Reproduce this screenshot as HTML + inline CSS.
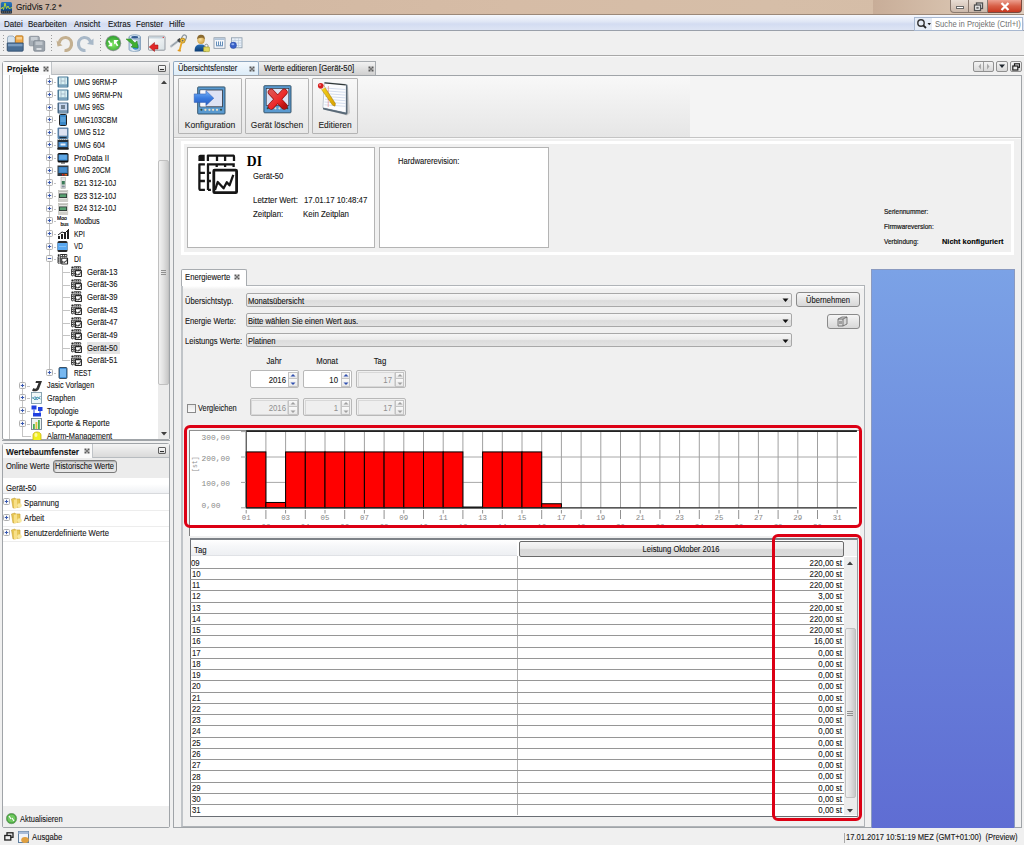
<!DOCTYPE html><html><head><meta charset="utf-8"><style>
html,body{margin:0;padding:0;}
body{width:1024px;height:845px;overflow:hidden;position:relative;background:#f0f0f0;font-family:"Liberation Sans",sans-serif;}
body>div{position:absolute;box-sizing:border-box;}
</style></head><body>
<div style="left:0px;top:0px;width:1024px;height:15px;background:linear-gradient(to right,#c6b0a2 0%,#d2b8a2 20%,#d6bca6 50%,#d6bea8 75%,#d4bca6 100%);"></div>
<div style="left:873px;top:0px;width:151px;height:14px;background:linear-gradient(to right,#c8ad98,#d6c0ac 50%,#e0cfc0 100%);"></div>
<div style="left:0px;top:14px;width:1024px;height:1px;background:#9c8878;"></div>
<svg style="position:absolute;left:0px;top:0px" width="15" height="15" viewBox="0 0 15 15"><defs><linearGradient id="aig" x1="0" y1="0" x2="0" y2="1"><stop offset="0" stop-color="#2a78c0"/><stop offset="1" stop-color="#0a3a78"/></linearGradient></defs><rect x="0.8" y="2" width="11.2" height="11.5" rx="1.5" fill="url(#aig)"/><path d="M1 9 L2.5 7 L3.5 9.5 L5 3 L6.5 8.5 L8 6 L9.5 9 L11 7.5 L12 8" stroke="#b8d838" stroke-width="1" fill="none"/><rect x="1" y="10.8" width="11" height="2.5" fill="#303840"/><path d="M2 12 L11 12" stroke="#a0a0a0" stroke-width="0.6" stroke-dasharray="1 1"/></svg>
<div style="left:15.5px;top:3.16px;font:normal 9.265999999999998px/9.265999999999998px 'Liberation Sans';color:#1a1a1a;white-space:nowrap;transform:scaleX(0.885);transform-origin:0 50%;-webkit-text-stroke:0.1px #000;">GridVis 7.2 *</div>
<div style="left:950px;top:0px;width:19px;height:13px;background:linear-gradient(#e8ddd4,#cbb8aa);border:1px solid #8a7a70;border-top:none;border-radius:0 0 0 4px;"></div>
<div style="left:969px;top:0px;width:19px;height:13px;background:linear-gradient(#e8ddd4,#cbb8aa);border:1px solid #8a7a70;border-top:none;border-left:none;"></div>
<div style="left:988px;top:0px;width:34px;height:13px;background:linear-gradient(#eca090,#d86048 50%,#c83820);border:1px solid #7a4a40;border-top:none;border-left:none;border-radius:0 0 4px 0;"></div>
<div style="left:956px;top:6px;width:8px;height:3px;background:#fff;border:1px solid #6a6a6a;"></div>
<svg style="position:absolute;left:972px;top:2px" width="14" height="10" viewBox="0 0 14 10"><rect x="4.5" y="1" width="6" height="5.5" fill="#f0f0f0" stroke="#505050" stroke-width="1.3"/><rect x="2.5" y="3" width="6" height="5.5" fill="#f4f4f4" stroke="#505050" stroke-width="1.3"/><rect x="4.3" y="4.8" width="2.4" height="2" fill="#6a6a6a"/></svg>
<svg style="position:absolute;left:998px;top:1px" width="14" height="11" viewBox="0 0 14 11"><path d="M3.5 2 L10.5 9 M10.5 2 L3.5 9" stroke="#fff" stroke-width="2.2"/></svg>
<div style="left:0px;top:15px;width:1024px;height:16px;background:linear-gradient(#f6f8fd 0%,#dfe6f5 45%,#d3dcf1 60%,#dde4f4 100%);border-bottom:1px solid #9aa0aa;"></div>
<div style="left:3.5px;top:20.17px;font:normal 9.04px/9.04px 'Liberation Sans';color:#1a1a1a;white-space:nowrap;transform:scaleX(0.885);transform-origin:0 50%;-webkit-text-stroke:0.1px #000;">Datei</div>
<div style="left:28.3px;top:20.17px;font:normal 9.04px/9.04px 'Liberation Sans';color:#1a1a1a;white-space:nowrap;transform:scaleX(0.885);transform-origin:0 50%;-webkit-text-stroke:0.1px #000;">Bearbeiten</div>
<div style="left:73.8px;top:20.17px;font:normal 9.04px/9.04px 'Liberation Sans';color:#1a1a1a;white-space:nowrap;transform:scaleX(0.885);transform-origin:0 50%;-webkit-text-stroke:0.1px #000;">Ansicht</div>
<div style="left:108.4px;top:20.17px;font:normal 9.04px/9.04px 'Liberation Sans';color:#1a1a1a;white-space:nowrap;transform:scaleX(0.885);transform-origin:0 50%;-webkit-text-stroke:0.1px #000;">Extras</div>
<div style="left:135.7px;top:20.17px;font:normal 9.04px/9.04px 'Liberation Sans';color:#1a1a1a;white-space:nowrap;transform:scaleX(0.885);transform-origin:0 50%;-webkit-text-stroke:0.1px #000;">Fenster</div>
<div style="left:168.9px;top:20.17px;font:normal 9.04px/9.04px 'Liberation Sans';color:#1a1a1a;white-space:nowrap;transform:scaleX(0.885);transform-origin:0 50%;-webkit-text-stroke:0.1px #000;">Hilfe</div>
<div style="left:914px;top:16.5px;width:109px;height:14.0px;background:#fff;border:1px solid #a8b8d0;"></div>
<div style="left:915px;top:17.5px;width:17px;height:12.0px;background:#e6ecf6;"></div>
<svg style="position:absolute;left:916px;top:18px" width="16" height="12" viewBox="0 0 16 12"><circle cx="5" cy="5" r="3.2" stroke="#333" stroke-width="1.4" fill="none"/><path d="M7.3 7.3 L10 10" stroke="#222" stroke-width="1.8"/><path d="M11.5 5 L15 5 L13.25 7.2 Z" fill="#222"/></svg>
<div style="left:935px;top:19.85px;font:normal 8.678117456640946px/8.678117456640946px 'Liberation Sans';color:#707070;white-space:nowrap;transform:scaleX(0.885);transform-origin:0 50%;">Suche in Projekte (Ctrl+I)</div>
<div style="left:0px;top:31px;width:1024px;height:24px;background:#f0f0f0;"></div>
<div style="left:0px;top:55px;width:1024px;height:1px;background:#a8a8a8;"></div>
<div style="left:0px;top:56px;width:1024px;height:1px;background:#fafafa;"></div>
<div style="left:3px;top:35px;width:1px;height:16px;background:repeating-linear-gradient(#9a9a9a 0 1px,transparent 1px 3px);"></div>
<div style="left:51px;top:35px;width:1px;height:16px;background:repeating-linear-gradient(#9a9a9a 0 1px,transparent 1px 3px);"></div>
<div style="left:100px;top:35px;width:1px;height:16px;background:repeating-linear-gradient(#9a9a9a 0 1px,transparent 1px 3px);"></div>
<svg style="position:absolute;left:6px;top:34px" width="19" height="19" viewBox="0 0 19 19"><path d="M1.5 16 L1.5 4 Q1.5 2 3.5 2 L7 2 L9 4 L9 9 L1.5 9 Z" fill="#d4e2ee" stroke="#8aa0b4" stroke-width="0.8"/><rect x="9.5" y="1.8" width="7.5" height="7.5" rx="1" fill="#f0a848" stroke="#b87820" stroke-width="0.8"/><rect x="10.5" y="3" width="5.5" height="2.5" fill="#f8d090"/><path d="M1.2 9 L17.2 9 L17.2 16.2 Q17.2 17.2 16.2 17.2 L2.2 17.2 Q1.2 17.2 1.2 16.2 Z" fill="#4a6e94" stroke="#2e4a68" stroke-width="0.8"/><rect x="2" y="9.8" width="14.5" height="2.5" fill="#7a9cc0"/></svg>
<svg style="position:absolute;left:28px;top:35px" width="18" height="17" viewBox="0 0 18 17"><rect x="1.3" y="1.3" width="10" height="9.5" rx="1.2" fill="#a4acb4" stroke="#848c96" stroke-width="0.8"/><rect x="3" y="2" width="6.5" height="3.5" fill="#c8ced4"/><rect x="5.7" y="5.7" width="11" height="10.5" rx="1.2" fill="#9ca4ac" stroke="#7c848e" stroke-width="0.8"/><rect x="7.5" y="6.5" width="7" height="3.5" fill="#c0c6cc"/><rect x="8.5" y="13" width="5" height="2" fill="#d8dce0"/></svg>
<svg style="position:absolute;left:56px;top:35px" width="17" height="17" viewBox="0 0 17 17"><path d="M3.2 8.5 C3.5 4 7 2.3 10 2.5 C14 3 15.8 6.5 15.5 9.8 C15 13.5 12 15.8 8.5 15.5" stroke="#c4b090" stroke-width="3.2" fill="none"/><path d="M0.5 5.5 L6.5 10.5 L1.5 11.5 Z" fill="#c4b090"/></svg>
<svg style="position:absolute;left:77px;top:35px" width="17" height="17" viewBox="0 0 17 17"><path d="M13.8 8.5 C13.5 4 10 2.3 7 2.5 C3 3 1.2 6.5 1.5 9.8 C2 13.5 5 15.8 8.5 15.5" stroke="#a8b8c8" stroke-width="3.2" fill="none"/><path d="M16.5 3.5 L16.5 10 L10 9 Z" fill="#a8b8c8"/></svg>
<svg style="position:absolute;left:103px;top:33px" width="20" height="20" viewBox="0 0 20 20"><defs><radialGradient id="gg" cx="0.5" cy="0.6" r="0.6"><stop offset="0" stop-color="#80e860"/><stop offset="1" stop-color="#30a030"/></radialGradient></defs><circle cx="10.2" cy="10.2" r="8" fill="#8a9490"/><circle cx="10.2" cy="10.2" r="7.1" fill="url(#gg)"/><path d="M5.6 7.6 L8.4 12.6" stroke="#fff" stroke-width="1.6"/><path d="M4.8 13.3 L9.2 13.3 L9.2 9.2 Z" fill="#fff"/><path d="M11.6 7.8 L14.6 12.8" stroke="#fff" stroke-width="1.6"/><path d="M10.8 7 L15.6 7 L11 11.6 Z" fill="#fff"/></svg>
<svg style="position:absolute;left:124px;top:33px" width="18" height="20" viewBox="0 0 18 20"><defs><linearGradient id="dbg" x1="0" x2="1"><stop offset="0" stop-color="#b8d0e8"/><stop offset="0.4" stop-color="#f4f8fc"/><stop offset="1" stop-color="#90b0d0"/></linearGradient></defs><path d="M5 4 L5 16.5 C5 19 16.5 19 16.5 16.5 L16.5 4 Z" fill="url(#dbg)" stroke="#7090b0" stroke-width="0.7"/><ellipse cx="10.75" cy="4" rx="5.75" ry="2.2" fill="#d8e8f4" stroke="#7090b0" stroke-width="0.7"/><ellipse cx="10.75" cy="4.2" rx="3.5" ry="1.2" fill="#305890"/><circle cx="11.5" cy="13.5" r="3.2" fill="#3a90d0"/><path d="M2 6 L7 6 L11 10 L13 8 L14 15 L7 14 L9 12 Z" fill="#40b030" stroke="#288020" stroke-width="0.5"/></svg>
<svg style="position:absolute;left:147px;top:35px" width="19" height="17" viewBox="0 0 19 17"><defs><linearGradient id="wg" x1="0" y1="0" x2="1" y2="1"><stop offset="0" stop-color="#ffffff"/><stop offset="1" stop-color="#d8e0e4"/></linearGradient></defs><rect x="1.5" y="1.2" width="16.5" height="14" rx="0.8" fill="url(#wg)" stroke="#8a9098" stroke-width="0.9"/><rect x="1.8" y="1.5" width="16" height="2" fill="#c8d4dc"/><circle cx="16.3" cy="2.4" r="0.7" fill="#e04040"/><path d="M2.2 12 L7.5 7.5 L7.5 10 L11 10 L11 14 L7.5 14 L7.5 16.5 Z" fill="#e02828" stroke="#a01010" stroke-width="0.5"/></svg>
<svg style="position:absolute;left:168px;top:30px" width="22" height="24" viewBox="0 0 22 24"><ellipse cx="15.9" cy="8" rx="2.2" ry="3.2" transform="rotate(30 15.9 8)" fill="none" stroke="#8a949c" stroke-width="1.1"/><path d="M3.2 16.3 L11.6 9.9" stroke="#b8c0c8" stroke-width="2.4" stroke-linecap="round"/><path d="M3.5 16 L11 10.3" stroke="#707880" stroke-width="0.6"/><rect x="9.8" y="8.6" width="3.2" height="3.6" transform="rotate(-37 11.4 10.4)" fill="#404448"/><circle cx="14.6" cy="10.6" r="2.5" fill="#f0c040" stroke="#b08010" stroke-width="0.8"/><circle cx="14.6" cy="10.6" r="0.9" fill="#606870"/><path d="M13.6 12.8 L11.6 20.5" stroke="#e8a828" stroke-width="1.8"/><path d="M10 19.5 L13 20.2 L12.5 21.8 L9.5 21" fill="#e09820"/></svg>
<svg style="position:absolute;left:190.5px;top:33px" width="20" height="20" viewBox="0 0 20 20"><defs><radialGradient id="fg" cx="0.4" cy="0.4" r="0.6"><stop offset="0" stop-color="#f8e0a0"/><stop offset="1" stop-color="#d0a040"/></radialGradient><linearGradient id="bg2" x1="0" y1="0" x2="0" y2="1"><stop offset="0" stop-color="#2a70b8"/><stop offset="1" stop-color="#0a3a70"/></linearGradient></defs><path d="M3.6 18.5 C3.6 13 5.5 11.5 9.8 11.5 C13.8 11.5 15 13 15 18.5 Z" fill="url(#bg2)"/><circle cx="10" cy="7.2" r="3.7" fill="url(#fg)"/><path d="M6.2 6.5 C6 3 8 1.8 10.2 1.8 C12.8 1.8 14.2 3.5 13.8 7 C13 4.8 11.5 4.5 10 4.8 C8 5 7 5.5 6.2 6.5 Z" fill="#8a6a30"/><path d="M13.8 14.2 L13.8 12.5 C13.8 10.8 17 10.8 17 12.5 L17 14.2" fill="none" stroke="#8a9090" stroke-width="1"/><rect x="12.6" y="14" width="5.8" height="4.6" rx="0.5" fill="#e0d860" stroke="#a09820" stroke-width="0.6"/></svg>
<svg style="position:absolute;left:213px;top:37px" width="13" height="13" viewBox="0 0 13 13"><rect x="1" y="0.8" width="11" height="10.5" fill="#f4f6fa" stroke="#8090a0" stroke-width="0.8"/><rect x="1.4" y="1.2" width="10.2" height="1.8" fill="#b0c4d8"/><path d="M3.5 4.5 L3.5 8.5 M5.5 4.5 L5.5 8.5 M7.5 4.5 L7.5 8.5 M9.5 4.5 L9.5 8.5 M3 8.8 L10 8.8" stroke="#5080b0" stroke-width="0.9"/></svg>
<svg style="position:absolute;left:229px;top:37px" width="14" height="13" viewBox="0 0 14 13"><rect x="2.5" y="0.8" width="10.5" height="10" fill="#e8f0f8" stroke="#8898a8" stroke-width="0.8"/><path d="M2.5 3.5 L13 3.5 M2.5 6 L13 6 M2.5 8.5 L13 8.5 M6 0.8 L6 10.8 M9.5 0.8 L9.5 10.8" stroke="#b8c8d8" stroke-width="0.6"/><circle cx="4.3" cy="8.3" r="3.2" fill="#3860c8" stroke="#2848a0" stroke-width="0.5"/><ellipse cx="3.8" cy="7.3" rx="1.5" ry="1" fill="#90b0f0"/></svg>
<div style="left:2px;top:61px;width:168px;height:379px;border:1px solid #a0a4a8;border-radius:3px 3px 2px 2px;background:#fff;"></div>
<div style="left:3px;top:62px;width:166px;height:13px;background:linear-gradient(#f4f4f4,#dadada);border-bottom:1px solid #b8bcc0;"></div>
<div style="left:3px;top:62px;width:49px;height:13px;background:#fafafa;border-right:1px solid #c0c4c8;"></div>
<div style="left:6.5px;top:64.69px;font:bold 9.2095px/9.2095px 'Liberation Sans';color:#1a1a1a;white-space:nowrap;transform:scaleX(0.885);transform-origin:0 50%;-webkit-text-stroke:0.1px #000;">Projekte</div>
<svg style="position:absolute;left:43px;top:66px" width="6" height="6" viewBox="0 0 6 6"><g fill="#5a5a5a"><rect x="0.5" y="0.5" width="2" height="2"/><rect x="3.5" y="0.5" width="2" height="2"/><rect x="0.5" y="3.5" width="2" height="2"/><rect x="3.5" y="3.5" width="2" height="2"/><rect x="2" y="2" width="2" height="2" fill="#787878"/></g></svg>
<div style="left:158px;top:65px;width:8px;height:7px;border:1px solid #606060;border-radius:1px;background:linear-gradient(#fafafa,#d8d8d8);"></div>
<div style="left:160px;top:69px;width:4px;height:1px;background:#303030;"></div>
<div style="left:158px;top:75px;width:11px;height:364px;background:#ececec;"></div>
<div style="left:158px;top:159.5px;width:11px;height:225.0px;background:linear-gradient(to right,#f2f2f2,#e0e0e0 50%,#c8c8c8);border:1px solid #c0c0c0;border-radius:2px;"></div>
<div style="left:161px;top:270px;width:5px;height:1px;background:#909090;"></div>
<div style="left:161px;top:272px;width:5px;height:1px;background:#909090;"></div>
<div style="left:161px;top:274px;width:5px;height:1px;background:#909090;"></div>
<svg style="position:absolute;left:160px;top:79px" width="8" height="6" viewBox="0 0 8 6"><path d="M1 5 L4 1.5 L7 5 Z" fill="#404040"/></svg>
<svg style="position:absolute;left:160px;top:431px" width="8" height="6" viewBox="0 0 8 6"><path d="M1 1 L4 4.5 L7 1 Z" fill="#404040"/></svg>
<div style="left:9px;top:75px;width:1px;height:364px;background:repeating-linear-gradient(#c4c4c4 0 1px,#c4c4c4 1px 2px);"></div>
<div style="left:22px;top:75px;width:1px;height:362px;background:repeating-linear-gradient(#c4c4c4 0 1px,#c4c4c4 1px 2px);"></div>
<div style="left:49px;top:75px;width:1px;height:298px;background:repeating-linear-gradient(#c4c4c4 0 1px,#c4c4c4 1px 2px);"></div>
<div style="left:62px;top:265.95px;width:1px;height:95.55000000000001px;background:repeating-linear-gradient(#c4c4c4 0 1px,#c4c4c4 1px 2px);"></div>
<div style="left:54px;top:82px;width:2px;height:1px;background:repeating-linear-gradient(to right,#c4c4c4 0 1px,#c4c4c4 1px 2px);"></div>
<svg style="position:absolute;left:46px;top:78px" width="8" height="8" viewBox="0 0 8 8"><rect x="0.5" y="0.5" width="6" height="6" rx="1" fill="#fafafa" stroke="#b0b0b0"/><path d="M1.8 3.5 L5.2 3.5" stroke="#3858b0" stroke-width="1"/><path d="M3.5 1.8 L3.5 5.2" stroke="#3858b0" stroke-width="1"/></svg>
<svg style="position:absolute;left:57px;top:76.2px" width="12" height="12" viewBox="0 0 12 12"><rect x="0.5" y="0.5" width="11" height="11" fill="#4a7a98" rx="1"/><rect x="2" y="1.5" width="8" height="7" fill="#d8f0f4"/><path d="M4 2 L4 8 M8 2 L8 8 M4 5 L8 5" stroke="#9ab" stroke-width="0.7"/><rect x="2" y="9.5" width="8" height="1" fill="#a8c8e0"/></svg>
<div style="left:74px;top:77.89px;font:normal 8.379888268156424px/8.379888268156424px 'Liberation Sans';color:#1a1a1a;white-space:nowrap;transform:scaleX(0.823);transform-origin:0 50%;-webkit-text-stroke:0.1px #000;">UMG 96RM-P</div>
<div style="left:54px;top:95px;width:2px;height:1px;background:repeating-linear-gradient(to right,#c4c4c4 0 1px,#c4c4c4 1px 2px);"></div>
<svg style="position:absolute;left:46px;top:91px" width="8" height="8" viewBox="0 0 8 8"><rect x="0.5" y="0.5" width="6" height="6" rx="1" fill="#fafafa" stroke="#b0b0b0"/><path d="M1.8 3.5 L5.2 3.5" stroke="#3858b0" stroke-width="1"/><path d="M3.5 1.8 L3.5 5.2" stroke="#3858b0" stroke-width="1"/></svg>
<svg style="position:absolute;left:57px;top:88.85000000000001px" width="12" height="12" viewBox="0 0 12 12"><rect x="0.5" y="0.5" width="11" height="11" fill="#4a7a98" rx="1"/><rect x="2" y="1.5" width="8" height="7" fill="#d8f0f4"/><path d="M4 2 L4 8 M8 2 L8 8 M4 5 L8 5" stroke="#9ab" stroke-width="0.7"/><rect x="2" y="9.5" width="8" height="1" fill="#a8c8e0"/></svg>
<div style="left:74px;top:90.54px;font:normal 8.379888268156424px/8.379888268156424px 'Liberation Sans';color:#1a1a1a;white-space:nowrap;transform:scaleX(0.823);transform-origin:0 50%;-webkit-text-stroke:0.1px #000;">UMG 96RM-PN</div>
<div style="left:54px;top:108px;width:2px;height:1px;background:repeating-linear-gradient(to right,#c4c4c4 0 1px,#c4c4c4 1px 2px);"></div>
<svg style="position:absolute;left:46px;top:104px" width="8" height="8" viewBox="0 0 8 8"><rect x="0.5" y="0.5" width="6" height="6" rx="1" fill="#fafafa" stroke="#b0b0b0"/><path d="M1.8 3.5 L5.2 3.5" stroke="#3858b0" stroke-width="1"/><path d="M3.5 1.8 L3.5 5.2" stroke="#3858b0" stroke-width="1"/></svg>
<svg style="position:absolute;left:57px;top:101.5px" width="12" height="12" viewBox="0 0 12 12"><rect x="0.5" y="0.5" width="11" height="11" fill="#4a6a88" rx="1"/><rect x="2" y="1.5" width="8" height="7" fill="#c8d8f0"/><rect x="4" y="3" width="4" height="4" fill="#708090"/><rect x="2" y="9.5" width="8" height="1" fill="#a8c8e0"/></svg>
<div style="left:74px;top:103.19px;font:normal 8.379888268156424px/8.379888268156424px 'Liberation Sans';color:#1a1a1a;white-space:nowrap;transform:scaleX(0.829);transform-origin:0 50%;-webkit-text-stroke:0.1px #000;">UMG 96S</div>
<div style="left:54px;top:120px;width:2px;height:1px;background:repeating-linear-gradient(to right,#c4c4c4 0 1px,#c4c4c4 1px 2px);"></div>
<svg style="position:absolute;left:46px;top:116px" width="8" height="8" viewBox="0 0 8 8"><rect x="0.5" y="0.5" width="6" height="6" rx="1" fill="#fafafa" stroke="#b0b0b0"/><path d="M1.8 3.5 L5.2 3.5" stroke="#3858b0" stroke-width="1"/><path d="M3.5 1.8 L3.5 5.2" stroke="#3858b0" stroke-width="1"/></svg>
<svg style="position:absolute;left:57px;top:114.15px" width="12" height="12" viewBox="0 0 12 12"><rect x="2.5" y="0.5" width="7" height="11" rx="1" fill="#3a88c8" stroke="#202020" stroke-width="1"/><rect x="3.5" y="3" width="5" height="5" fill="#5aa0d8"/></svg>
<div style="left:74px;top:115.84px;font:normal 8.379888268156424px/8.379888268156424px 'Liberation Sans';color:#1a1a1a;white-space:nowrap;transform:scaleX(0.832);transform-origin:0 50%;-webkit-text-stroke:0.1px #000;">UMG103CBM</div>
<div style="left:54px;top:133px;width:2px;height:1px;background:repeating-linear-gradient(to right,#c4c4c4 0 1px,#c4c4c4 1px 2px);"></div>
<svg style="position:absolute;left:46px;top:129px" width="8" height="8" viewBox="0 0 8 8"><rect x="0.5" y="0.5" width="6" height="6" rx="1" fill="#fafafa" stroke="#b0b0b0"/><path d="M1.8 3.5 L5.2 3.5" stroke="#3858b0" stroke-width="1"/><path d="M3.5 1.8 L3.5 5.2" stroke="#3858b0" stroke-width="1"/></svg>
<svg style="position:absolute;left:57px;top:126.80000000000001px" width="12" height="12" viewBox="0 0 12 12"><rect x="0.5" y="0.5" width="11" height="11.5" rx="1" fill="#5a88b0"/><rect x="1.8" y="1.5" width="8.5" height="7.5" fill="#dde2f2" stroke="#3a6088" stroke-width="0.5"/><rect x="2.5" y="10" width="7" height="1.2" fill="#1a2a3a"/></svg>
<div style="left:74px;top:128.49px;font:normal 8.379888268156424px/8.379888268156424px 'Liberation Sans';color:#1a1a1a;white-space:nowrap;transform:scaleX(0.859);transform-origin:0 50%;-webkit-text-stroke:0.1px #000;">UMG 512</div>
<div style="left:54px;top:145px;width:2px;height:1px;background:repeating-linear-gradient(to right,#c4c4c4 0 1px,#c4c4c4 1px 2px);"></div>
<svg style="position:absolute;left:46px;top:141px" width="8" height="8" viewBox="0 0 8 8"><rect x="0.5" y="0.5" width="6" height="6" rx="1" fill="#fafafa" stroke="#b0b0b0"/><path d="M1.8 3.5 L5.2 3.5" stroke="#3858b0" stroke-width="1"/><path d="M3.5 1.8 L3.5 5.2" stroke="#3858b0" stroke-width="1"/></svg>
<svg style="position:absolute;left:57px;top:139.45px" width="12" height="12" viewBox="0 0 12 12"><rect x="0.5" y="0.5" width="11" height="10" fill="#283038"/><path d="M1 0.5 L11 0.5" stroke="#ddd" stroke-width="0.8" stroke-dasharray="1 1"/><rect x="1.5" y="3" width="9" height="5" fill="#4a90d0"/><rect x="3.5" y="4.5" width="5" height="2" fill="#e8f0f8"/><rect x="0.5" y="9" width="11" height="1.5" fill="#202020"/></svg>
<div style="left:74px;top:141.14px;font:normal 8.379888268156424px/8.379888268156424px 'Liberation Sans';color:#1a1a1a;white-space:nowrap;transform:scaleX(0.865);transform-origin:0 50%;-webkit-text-stroke:0.1px #000;">UMG 604</div>
<div style="left:54px;top:158px;width:2px;height:1px;background:repeating-linear-gradient(to right,#c4c4c4 0 1px,#c4c4c4 1px 2px);"></div>
<svg style="position:absolute;left:46px;top:154px" width="8" height="8" viewBox="0 0 8 8"><rect x="0.5" y="0.5" width="6" height="6" rx="1" fill="#fafafa" stroke="#b0b0b0"/><path d="M1.8 3.5 L5.2 3.5" stroke="#3858b0" stroke-width="1"/><path d="M3.5 1.8 L3.5 5.2" stroke="#3858b0" stroke-width="1"/></svg>
<svg style="position:absolute;left:57px;top:152.10000000000002px" width="12" height="12" viewBox="0 0 12 12"><rect x="0.5" y="1" width="11" height="9.5" rx="1.5" fill="#101010"/><rect x="1.5" y="2.5" width="9" height="6" fill="#4a9ae0"/><path d="M2.5 4 L9.5 4 M2.5 6 L9.5 6" stroke="#90c8f0" stroke-width="0.6"/><rect x="4" y="10.5" width="4" height="1" fill="#303030"/></svg>
<div style="left:74px;top:153.79px;font:normal 8.379888268156424px/8.379888268156424px 'Liberation Sans';color:#1a1a1a;white-space:nowrap;transform:scaleX(0.933);transform-origin:0 50%;-webkit-text-stroke:0.1px #000;">ProData II</div>
<div style="left:54px;top:171px;width:2px;height:1px;background:repeating-linear-gradient(to right,#c4c4c4 0 1px,#c4c4c4 1px 2px);"></div>
<svg style="position:absolute;left:46px;top:167px" width="8" height="8" viewBox="0 0 8 8"><rect x="0.5" y="0.5" width="6" height="6" rx="1" fill="#fafafa" stroke="#b0b0b0"/><path d="M1.8 3.5 L5.2 3.5" stroke="#3858b0" stroke-width="1"/><path d="M3.5 1.8 L3.5 5.2" stroke="#3858b0" stroke-width="1"/></svg>
<svg style="position:absolute;left:57px;top:164.75px" width="12" height="12" viewBox="0 0 12 12"><rect x="0.5" y="0.5" width="11" height="10.5" fill="#303840"/><rect x="1.5" y="2" width="9" height="6" fill="#3a80c0"/><path d="M2.5 4 L9.5 4 M2.5 6 L9.5 6" stroke="#6ab0e8" stroke-width="0.6"/><rect x="5" y="9" width="1.5" height="1.5" fill="#e02020"/><rect x="7.5" y="9" width="2.5" height="1.5" fill="#f06010"/></svg>
<div style="left:74px;top:166.44px;font:normal 8.379888268156424px/8.379888268156424px 'Liberation Sans';color:#1a1a1a;white-space:nowrap;transform:scaleX(0.827);transform-origin:0 50%;-webkit-text-stroke:0.1px #000;">UMG 20CM</div>
<div style="left:54px;top:183px;width:2px;height:1px;background:repeating-linear-gradient(to right,#c4c4c4 0 1px,#c4c4c4 1px 2px);"></div>
<svg style="position:absolute;left:46px;top:179px" width="8" height="8" viewBox="0 0 8 8"><rect x="0.5" y="0.5" width="6" height="6" rx="1" fill="#fafafa" stroke="#b0b0b0"/><path d="M1.8 3.5 L5.2 3.5" stroke="#3858b0" stroke-width="1"/><path d="M3.5 1.8 L3.5 5.2" stroke="#3858b0" stroke-width="1"/></svg>
<svg style="position:absolute;left:57px;top:177.4px" width="12" height="12" viewBox="0 0 12 12"><rect x="4" y="0.5" width="4.5" height="11" fill="#e4e6e4" stroke="#a8aca8" stroke-width="0.6"/><rect x="4.8" y="4" width="3" height="3.5" fill="#3a7a58"/><rect x="4.8" y="8.5" width="3" height="2" fill="#8890a0"/></svg>
<div style="left:74px;top:179.09px;font:normal 8.379888268156424px/8.379888268156424px 'Liberation Sans';color:#1a1a1a;white-space:nowrap;transform:scaleX(0.889);transform-origin:0 50%;-webkit-text-stroke:0.1px #000;">B21 312-10J</div>
<div style="left:54px;top:196px;width:2px;height:1px;background:repeating-linear-gradient(to right,#c4c4c4 0 1px,#c4c4c4 1px 2px);"></div>
<svg style="position:absolute;left:46px;top:192px" width="8" height="8" viewBox="0 0 8 8"><rect x="0.5" y="0.5" width="6" height="6" rx="1" fill="#fafafa" stroke="#b0b0b0"/><path d="M1.8 3.5 L5.2 3.5" stroke="#3858b0" stroke-width="1"/><path d="M3.5 1.8 L3.5 5.2" stroke="#3858b0" stroke-width="1"/></svg>
<svg style="position:absolute;left:57px;top:190.05px" width="12" height="12" viewBox="0 0 12 12"><rect x="1.3" y="0.5" width="9.5" height="11" fill="#e4e4e0" stroke="#b8b8b0" stroke-width="0.6"/><rect x="2" y="3.5" width="8" height="4.5" fill="#303838"/><rect x="2.8" y="4.3" width="6.4" height="2.8" fill="#58a070"/><path d="M2 1.5 L10 1.5 M2 10 L10 10" stroke="#a0a098" stroke-width="0.6"/></svg>
<div style="left:74px;top:191.74px;font:normal 8.379888268156424px/8.379888268156424px 'Liberation Sans';color:#1a1a1a;white-space:nowrap;transform:scaleX(0.889);transform-origin:0 50%;-webkit-text-stroke:0.1px #000;">B23 312-10J</div>
<div style="left:54px;top:209px;width:2px;height:1px;background:repeating-linear-gradient(to right,#c4c4c4 0 1px,#c4c4c4 1px 2px);"></div>
<svg style="position:absolute;left:46px;top:205px" width="8" height="8" viewBox="0 0 8 8"><rect x="0.5" y="0.5" width="6" height="6" rx="1" fill="#fafafa" stroke="#b0b0b0"/><path d="M1.8 3.5 L5.2 3.5" stroke="#3858b0" stroke-width="1"/><path d="M3.5 1.8 L3.5 5.2" stroke="#3858b0" stroke-width="1"/></svg>
<svg style="position:absolute;left:57px;top:202.7px" width="12" height="12" viewBox="0 0 12 12"><rect x="1.3" y="0.5" width="9.5" height="11" fill="#e4e4e0" stroke="#b8b8b0" stroke-width="0.6"/><rect x="2" y="3.5" width="8" height="4.5" fill="#303838"/><rect x="2.8" y="4.3" width="6.4" height="2.8" fill="#58a070"/><path d="M2 1.5 L10 1.5 M2 10 L10 10" stroke="#a0a098" stroke-width="0.6"/></svg>
<div style="left:74px;top:204.39px;font:normal 8.379888268156424px/8.379888268156424px 'Liberation Sans';color:#1a1a1a;white-space:nowrap;transform:scaleX(0.889);transform-origin:0 50%;-webkit-text-stroke:0.1px #000;">B24 312-10J</div>
<div style="left:54px;top:221px;width:2px;height:1px;background:repeating-linear-gradient(to right,#c4c4c4 0 1px,#c4c4c4 1px 2px);"></div>
<svg style="position:absolute;left:46px;top:217px" width="8" height="8" viewBox="0 0 8 8"><rect x="0.5" y="0.5" width="6" height="6" rx="1" fill="#fafafa" stroke="#b0b0b0"/><path d="M1.8 3.5 L5.2 3.5" stroke="#3858b0" stroke-width="1"/><path d="M3.5 1.8 L3.5 5.2" stroke="#3858b0" stroke-width="1"/></svg>
<svg style="position:absolute;left:57px;top:215.35000000000002px" width="12" height="12" viewBox="0 0 12 12"><text x="0" y="4.5" font-size="5" font-family="Liberation Sans" fill="#111" stroke="#111" stroke-width="0.2">Moo</text><text x="3.5" y="10.5" font-size="5" font-family="Liberation Sans" fill="#111" stroke="#111" stroke-width="0.2">bus</text></svg>
<div style="left:74px;top:217.04px;font:normal 8.379888268156424px/8.379888268156424px 'Liberation Sans';color:#1a1a1a;white-space:nowrap;transform:scaleX(0.865);transform-origin:0 50%;-webkit-text-stroke:0.1px #000;">Modbus</div>
<div style="left:54px;top:234px;width:2px;height:1px;background:repeating-linear-gradient(to right,#c4c4c4 0 1px,#c4c4c4 1px 2px);"></div>
<svg style="position:absolute;left:46px;top:230px" width="8" height="8" viewBox="0 0 8 8"><rect x="0.5" y="0.5" width="6" height="6" rx="1" fill="#fafafa" stroke="#b0b0b0"/><path d="M1.8 3.5 L5.2 3.5" stroke="#3858b0" stroke-width="1"/><path d="M3.5 1.8 L3.5 5.2" stroke="#3858b0" stroke-width="1"/></svg>
<svg style="position:absolute;left:57px;top:228.0px" width="12" height="12" viewBox="0 0 12 12"><path d="M1 11 L1 8 L3 8 L3 11 Z M4 11 L4 6 L6 6 L6 11 Z M7 11 L7 4 L9 4 L9 11 Z M10 11 L10 2 L12 2 L12 11 Z" fill="#202020"/><path d="M1 7 L5 4 L8 5 L12 1" stroke="#202020" stroke-width="1" fill="none"/></svg>
<div style="left:74px;top:229.69px;font:normal 8.379888268156424px/8.379888268156424px 'Liberation Sans';color:#1a1a1a;white-space:nowrap;transform:scaleX(0.807);transform-origin:0 50%;-webkit-text-stroke:0.1px #000;">KPI</div>
<div style="left:54px;top:247px;width:2px;height:1px;background:repeating-linear-gradient(to right,#c4c4c4 0 1px,#c4c4c4 1px 2px);"></div>
<svg style="position:absolute;left:46px;top:243px" width="8" height="8" viewBox="0 0 8 8"><rect x="0.5" y="0.5" width="6" height="6" rx="1" fill="#fafafa" stroke="#b0b0b0"/><path d="M1.8 3.5 L5.2 3.5" stroke="#3858b0" stroke-width="1"/><path d="M3.5 1.8 L3.5 5.2" stroke="#3858b0" stroke-width="1"/></svg>
<svg style="position:absolute;left:57px;top:240.65000000000003px" width="12" height="12" viewBox="0 0 12 12"><rect x="0.5" y="0" width="10" height="11" rx="1.5" fill="#282828"/><rect x="0.5" y="2" width="10" height="7" fill="#5aa8f0"/><path d="M2 5.5 L9 5.5" stroke="#90c8f8" stroke-width="0.8"/></svg>
<div style="left:74px;top:242.34px;font:normal 8.379888268156424px/8.379888268156424px 'Liberation Sans';color:#1a1a1a;white-space:nowrap;transform:scaleX(0.773);transform-origin:0 50%;-webkit-text-stroke:0.1px #000;">VD</div>
<div style="left:54px;top:259px;width:2px;height:1px;background:repeating-linear-gradient(to right,#c4c4c4 0 1px,#c4c4c4 1px 2px);"></div>
<svg style="position:absolute;left:46px;top:255px" width="8" height="8" viewBox="0 0 8 8"><rect x="0.5" y="0.5" width="6" height="6" rx="1" fill="#fafafa" stroke="#b0b0b0"/><path d="M1.8 3.5 L5.2 3.5" stroke="#3858b0" stroke-width="1"/></svg>
<svg style="position:absolute;left:57px;top:253.3px" width="12" height="12" viewBox="0 0 12 12"><g transform="translate(0.8,1.3) scale(0.255) translate(-4.4,-4.7)"><g fill="none" stroke="#262626" stroke-width="3.8" stroke-linejoin="round"><path d="M13.9 10.9 L13.9 5.6 L39.8 5.6 Q40 5.6 40 7 L40 10.9 M23 5.6 L23 10.9 M31.1 5.6 L31.1 10.9"/><path d="M13 14.3 L40.8 14.3 M22.7 14.3 L22.7 16.9 M31.1 14.3 L31.1 16.9 M39.6 14.3 L39.6 16.9"/><path d="M10.9 14.3 L5.4 14.3 L5.4 38.5 Q5.4 39.9 7 39.9 L10.9 39.9 M5.4 22.8 L10.9 22.8 M5.4 31 L10.9 31"/><path d="M14 14.3 L14 40 M14 22.8 L16.9 22.8 M14 31 L16.9 31 M14 39.9 L16.9 39.9"/></g><path d="M4.4 10.9 L4.4 6.5 Q4.4 4.7 6.2 4.7 L10.7 4.7 L10.7 10.9 Z" fill="#262626"/><rect x="19.8" y="20.1" width="22.8" height="22.5" rx="0.8" fill="#fff" stroke="#262626" stroke-width="4.2"/><path d="M21 40 L23.7 32 L29.6 38.3 L32.8 32.2 L35.5 35.3 L39.3 24.9" fill="none" stroke="#262626" stroke-width="3.4" stroke-linejoin="round"/></g></svg>
<div style="left:74px;top:254.99px;font:normal 8.379888268156424px/8.379888268156424px 'Liberation Sans';color:#1a1a1a;white-space:nowrap;transform:scaleX(0.835);transform-origin:0 50%;-webkit-text-stroke:0.1px #000;">DI</div>
<div style="left:62px;top:272px;width:7.5px;height:1px;background:repeating-linear-gradient(to right,#c4c4c4 0 1px,#c4c4c4 1px 2px);"></div>
<svg style="position:absolute;left:71px;top:265.95px" width="12" height="12" viewBox="0 0 12 12"><g transform="translate(0.4,0.6) scale(0.262) translate(-4.4,-4.7)"><g fill="none" stroke="#262626" stroke-width="3.8" stroke-linejoin="round"><path d="M13.9 10.9 L13.9 5.6 L39.8 5.6 Q40 5.6 40 7 L40 10.9 M23 5.6 L23 10.9 M31.1 5.6 L31.1 10.9"/><path d="M13 14.3 L40.8 14.3 M22.7 14.3 L22.7 16.9 M31.1 14.3 L31.1 16.9 M39.6 14.3 L39.6 16.9"/><path d="M10.9 14.3 L5.4 14.3 L5.4 38.5 Q5.4 39.9 7 39.9 L10.9 39.9 M5.4 22.8 L10.9 22.8 M5.4 31 L10.9 31"/><path d="M14 14.3 L14 40 M14 22.8 L16.9 22.8 M14 31 L16.9 31 M14 39.9 L16.9 39.9"/></g><path d="M4.4 10.9 L4.4 6.5 Q4.4 4.7 6.2 4.7 L10.7 4.7 L10.7 10.9 Z" fill="#262626"/><rect x="19.8" y="20.1" width="22.8" height="22.5" rx="0.8" fill="#fff" stroke="#262626" stroke-width="4.2"/><path d="M21 40 L23.7 32 L29.6 38.3 L32.8 32.2 L35.5 35.3 L39.3 24.9" fill="none" stroke="#262626" stroke-width="3.4" stroke-linejoin="round"/></g></svg>
<div style="left:87px;top:267.64px;font:normal 8.379888268156424px/8.379888268156424px 'Liberation Sans';color:#1a1a1a;white-space:nowrap;transform:scaleX(0.925);transform-origin:0 50%;-webkit-text-stroke:0.1px #000;">Gerät-13</div>
<div style="left:62px;top:285px;width:7.5px;height:1px;background:repeating-linear-gradient(to right,#c4c4c4 0 1px,#c4c4c4 1px 2px);"></div>
<svg style="position:absolute;left:71px;top:278.6px" width="12" height="12" viewBox="0 0 12 12"><g transform="translate(0.4,0.6) scale(0.262) translate(-4.4,-4.7)"><g fill="none" stroke="#262626" stroke-width="3.8" stroke-linejoin="round"><path d="M13.9 10.9 L13.9 5.6 L39.8 5.6 Q40 5.6 40 7 L40 10.9 M23 5.6 L23 10.9 M31.1 5.6 L31.1 10.9"/><path d="M13 14.3 L40.8 14.3 M22.7 14.3 L22.7 16.9 M31.1 14.3 L31.1 16.9 M39.6 14.3 L39.6 16.9"/><path d="M10.9 14.3 L5.4 14.3 L5.4 38.5 Q5.4 39.9 7 39.9 L10.9 39.9 M5.4 22.8 L10.9 22.8 M5.4 31 L10.9 31"/><path d="M14 14.3 L14 40 M14 22.8 L16.9 22.8 M14 31 L16.9 31 M14 39.9 L16.9 39.9"/></g><path d="M4.4 10.9 L4.4 6.5 Q4.4 4.7 6.2 4.7 L10.7 4.7 L10.7 10.9 Z" fill="#262626"/><rect x="19.8" y="20.1" width="22.8" height="22.5" rx="0.8" fill="#fff" stroke="#262626" stroke-width="4.2"/><path d="M21 40 L23.7 32 L29.6 38.3 L32.8 32.2 L35.5 35.3 L39.3 24.9" fill="none" stroke="#262626" stroke-width="3.4" stroke-linejoin="round"/></g></svg>
<div style="left:87px;top:280.29px;font:normal 8.379888268156424px/8.379888268156424px 'Liberation Sans';color:#1a1a1a;white-space:nowrap;transform:scaleX(0.925);transform-origin:0 50%;-webkit-text-stroke:0.1px #000;">Gerät-36</div>
<div style="left:62px;top:297px;width:7.5px;height:1px;background:repeating-linear-gradient(to right,#c4c4c4 0 1px,#c4c4c4 1px 2px);"></div>
<svg style="position:absolute;left:71px;top:291.25px" width="12" height="12" viewBox="0 0 12 12"><g transform="translate(0.4,0.6) scale(0.262) translate(-4.4,-4.7)"><g fill="none" stroke="#262626" stroke-width="3.8" stroke-linejoin="round"><path d="M13.9 10.9 L13.9 5.6 L39.8 5.6 Q40 5.6 40 7 L40 10.9 M23 5.6 L23 10.9 M31.1 5.6 L31.1 10.9"/><path d="M13 14.3 L40.8 14.3 M22.7 14.3 L22.7 16.9 M31.1 14.3 L31.1 16.9 M39.6 14.3 L39.6 16.9"/><path d="M10.9 14.3 L5.4 14.3 L5.4 38.5 Q5.4 39.9 7 39.9 L10.9 39.9 M5.4 22.8 L10.9 22.8 M5.4 31 L10.9 31"/><path d="M14 14.3 L14 40 M14 22.8 L16.9 22.8 M14 31 L16.9 31 M14 39.9 L16.9 39.9"/></g><path d="M4.4 10.9 L4.4 6.5 Q4.4 4.7 6.2 4.7 L10.7 4.7 L10.7 10.9 Z" fill="#262626"/><rect x="19.8" y="20.1" width="22.8" height="22.5" rx="0.8" fill="#fff" stroke="#262626" stroke-width="4.2"/><path d="M21 40 L23.7 32 L29.6 38.3 L32.8 32.2 L35.5 35.3 L39.3 24.9" fill="none" stroke="#262626" stroke-width="3.4" stroke-linejoin="round"/></g></svg>
<div style="left:87px;top:292.94px;font:normal 8.379888268156424px/8.379888268156424px 'Liberation Sans';color:#1a1a1a;white-space:nowrap;transform:scaleX(0.925);transform-origin:0 50%;-webkit-text-stroke:0.1px #000;">Gerät-39</div>
<div style="left:62px;top:310px;width:7.5px;height:1px;background:repeating-linear-gradient(to right,#c4c4c4 0 1px,#c4c4c4 1px 2px);"></div>
<svg style="position:absolute;left:71px;top:303.90000000000003px" width="12" height="12" viewBox="0 0 12 12"><g transform="translate(0.4,0.6) scale(0.262) translate(-4.4,-4.7)"><g fill="none" stroke="#262626" stroke-width="3.8" stroke-linejoin="round"><path d="M13.9 10.9 L13.9 5.6 L39.8 5.6 Q40 5.6 40 7 L40 10.9 M23 5.6 L23 10.9 M31.1 5.6 L31.1 10.9"/><path d="M13 14.3 L40.8 14.3 M22.7 14.3 L22.7 16.9 M31.1 14.3 L31.1 16.9 M39.6 14.3 L39.6 16.9"/><path d="M10.9 14.3 L5.4 14.3 L5.4 38.5 Q5.4 39.9 7 39.9 L10.9 39.9 M5.4 22.8 L10.9 22.8 M5.4 31 L10.9 31"/><path d="M14 14.3 L14 40 M14 22.8 L16.9 22.8 M14 31 L16.9 31 M14 39.9 L16.9 39.9"/></g><path d="M4.4 10.9 L4.4 6.5 Q4.4 4.7 6.2 4.7 L10.7 4.7 L10.7 10.9 Z" fill="#262626"/><rect x="19.8" y="20.1" width="22.8" height="22.5" rx="0.8" fill="#fff" stroke="#262626" stroke-width="4.2"/><path d="M21 40 L23.7 32 L29.6 38.3 L32.8 32.2 L35.5 35.3 L39.3 24.9" fill="none" stroke="#262626" stroke-width="3.4" stroke-linejoin="round"/></g></svg>
<div style="left:87px;top:305.59px;font:normal 8.379888268156424px/8.379888268156424px 'Liberation Sans';color:#1a1a1a;white-space:nowrap;transform:scaleX(0.925);transform-origin:0 50%;-webkit-text-stroke:0.1px #000;">Gerät-43</div>
<div style="left:62px;top:323px;width:7.5px;height:1px;background:repeating-linear-gradient(to right,#c4c4c4 0 1px,#c4c4c4 1px 2px);"></div>
<svg style="position:absolute;left:71px;top:316.55px" width="12" height="12" viewBox="0 0 12 12"><g transform="translate(0.4,0.6) scale(0.262) translate(-4.4,-4.7)"><g fill="none" stroke="#262626" stroke-width="3.8" stroke-linejoin="round"><path d="M13.9 10.9 L13.9 5.6 L39.8 5.6 Q40 5.6 40 7 L40 10.9 M23 5.6 L23 10.9 M31.1 5.6 L31.1 10.9"/><path d="M13 14.3 L40.8 14.3 M22.7 14.3 L22.7 16.9 M31.1 14.3 L31.1 16.9 M39.6 14.3 L39.6 16.9"/><path d="M10.9 14.3 L5.4 14.3 L5.4 38.5 Q5.4 39.9 7 39.9 L10.9 39.9 M5.4 22.8 L10.9 22.8 M5.4 31 L10.9 31"/><path d="M14 14.3 L14 40 M14 22.8 L16.9 22.8 M14 31 L16.9 31 M14 39.9 L16.9 39.9"/></g><path d="M4.4 10.9 L4.4 6.5 Q4.4 4.7 6.2 4.7 L10.7 4.7 L10.7 10.9 Z" fill="#262626"/><rect x="19.8" y="20.1" width="22.8" height="22.5" rx="0.8" fill="#fff" stroke="#262626" stroke-width="4.2"/><path d="M21 40 L23.7 32 L29.6 38.3 L32.8 32.2 L35.5 35.3 L39.3 24.9" fill="none" stroke="#262626" stroke-width="3.4" stroke-linejoin="round"/></g></svg>
<div style="left:87px;top:318.24px;font:normal 8.379888268156424px/8.379888268156424px 'Liberation Sans';color:#1a1a1a;white-space:nowrap;transform:scaleX(0.925);transform-origin:0 50%;-webkit-text-stroke:0.1px #000;">Gerät-47</div>
<div style="left:62px;top:335px;width:7.5px;height:1px;background:repeating-linear-gradient(to right,#c4c4c4 0 1px,#c4c4c4 1px 2px);"></div>
<svg style="position:absolute;left:71px;top:329.2px" width="12" height="12" viewBox="0 0 12 12"><g transform="translate(0.4,0.6) scale(0.262) translate(-4.4,-4.7)"><g fill="none" stroke="#262626" stroke-width="3.8" stroke-linejoin="round"><path d="M13.9 10.9 L13.9 5.6 L39.8 5.6 Q40 5.6 40 7 L40 10.9 M23 5.6 L23 10.9 M31.1 5.6 L31.1 10.9"/><path d="M13 14.3 L40.8 14.3 M22.7 14.3 L22.7 16.9 M31.1 14.3 L31.1 16.9 M39.6 14.3 L39.6 16.9"/><path d="M10.9 14.3 L5.4 14.3 L5.4 38.5 Q5.4 39.9 7 39.9 L10.9 39.9 M5.4 22.8 L10.9 22.8 M5.4 31 L10.9 31"/><path d="M14 14.3 L14 40 M14 22.8 L16.9 22.8 M14 31 L16.9 31 M14 39.9 L16.9 39.9"/></g><path d="M4.4 10.9 L4.4 6.5 Q4.4 4.7 6.2 4.7 L10.7 4.7 L10.7 10.9 Z" fill="#262626"/><rect x="19.8" y="20.1" width="22.8" height="22.5" rx="0.8" fill="#fff" stroke="#262626" stroke-width="4.2"/><path d="M21 40 L23.7 32 L29.6 38.3 L32.8 32.2 L35.5 35.3 L39.3 24.9" fill="none" stroke="#262626" stroke-width="3.4" stroke-linejoin="round"/></g></svg>
<div style="left:87px;top:330.89px;font:normal 8.379888268156424px/8.379888268156424px 'Liberation Sans';color:#1a1a1a;white-space:nowrap;transform:scaleX(0.925);transform-origin:0 50%;-webkit-text-stroke:0.1px #000;">Gerät-49</div>
<div style="left:62px;top:348px;width:7.5px;height:1px;background:repeating-linear-gradient(to right,#c4c4c4 0 1px,#c4c4c4 1px 2px);"></div>
<div style="left:87px;top:341.55px;width:33px;height:12.600000000000023px;background:#e4e4e4;"></div>
<svg style="position:absolute;left:71px;top:341.85px" width="12" height="12" viewBox="0 0 12 12"><g transform="translate(0.4,0.6) scale(0.262) translate(-4.4,-4.7)"><g fill="none" stroke="#262626" stroke-width="3.8" stroke-linejoin="round"><path d="M13.9 10.9 L13.9 5.6 L39.8 5.6 Q40 5.6 40 7 L40 10.9 M23 5.6 L23 10.9 M31.1 5.6 L31.1 10.9"/><path d="M13 14.3 L40.8 14.3 M22.7 14.3 L22.7 16.9 M31.1 14.3 L31.1 16.9 M39.6 14.3 L39.6 16.9"/><path d="M10.9 14.3 L5.4 14.3 L5.4 38.5 Q5.4 39.9 7 39.9 L10.9 39.9 M5.4 22.8 L10.9 22.8 M5.4 31 L10.9 31"/><path d="M14 14.3 L14 40 M14 22.8 L16.9 22.8 M14 31 L16.9 31 M14 39.9 L16.9 39.9"/></g><path d="M4.4 10.9 L4.4 6.5 Q4.4 4.7 6.2 4.7 L10.7 4.7 L10.7 10.9 Z" fill="#262626"/><rect x="19.8" y="20.1" width="22.8" height="22.5" rx="0.8" fill="#fff" stroke="#262626" stroke-width="4.2"/><path d="M21 40 L23.7 32 L29.6 38.3 L32.8 32.2 L35.5 35.3 L39.3 24.9" fill="none" stroke="#262626" stroke-width="3.4" stroke-linejoin="round"/></g></svg>
<div style="left:87px;top:343.54px;font:normal 8.379888268156424px/8.379888268156424px 'Liberation Sans';color:#1a1a1a;white-space:nowrap;transform:scaleX(0.925);transform-origin:0 50%;-webkit-text-stroke:0.1px #000;">Gerät-50</div>
<div style="left:62px;top:360px;width:7.5px;height:1px;background:repeating-linear-gradient(to right,#c4c4c4 0 1px,#c4c4c4 1px 2px);"></div>
<svg style="position:absolute;left:71px;top:354.5px" width="12" height="12" viewBox="0 0 12 12"><g transform="translate(0.4,0.6) scale(0.262) translate(-4.4,-4.7)"><g fill="none" stroke="#262626" stroke-width="3.8" stroke-linejoin="round"><path d="M13.9 10.9 L13.9 5.6 L39.8 5.6 Q40 5.6 40 7 L40 10.9 M23 5.6 L23 10.9 M31.1 5.6 L31.1 10.9"/><path d="M13 14.3 L40.8 14.3 M22.7 14.3 L22.7 16.9 M31.1 14.3 L31.1 16.9 M39.6 14.3 L39.6 16.9"/><path d="M10.9 14.3 L5.4 14.3 L5.4 38.5 Q5.4 39.9 7 39.9 L10.9 39.9 M5.4 22.8 L10.9 22.8 M5.4 31 L10.9 31"/><path d="M14 14.3 L14 40 M14 22.8 L16.9 22.8 M14 31 L16.9 31 M14 39.9 L16.9 39.9"/></g><path d="M4.4 10.9 L4.4 6.5 Q4.4 4.7 6.2 4.7 L10.7 4.7 L10.7 10.9 Z" fill="#262626"/><rect x="19.8" y="20.1" width="22.8" height="22.5" rx="0.8" fill="#fff" stroke="#262626" stroke-width="4.2"/><path d="M21 40 L23.7 32 L29.6 38.3 L32.8 32.2 L35.5 35.3 L39.3 24.9" fill="none" stroke="#262626" stroke-width="3.4" stroke-linejoin="round"/></g></svg>
<div style="left:87px;top:356.19px;font:normal 8.379888268156424px/8.379888268156424px 'Liberation Sans';color:#1a1a1a;white-space:nowrap;transform:scaleX(0.925);transform-origin:0 50%;-webkit-text-stroke:0.1px #000;">Gerät-51</div>
<div style="left:54px;top:373px;width:2px;height:1px;background:repeating-linear-gradient(to right,#c4c4c4 0 1px,#c4c4c4 1px 2px);"></div>
<svg style="position:absolute;left:46px;top:369px" width="8" height="8" viewBox="0 0 8 8"><rect x="0.5" y="0.5" width="6" height="6" rx="1" fill="#fafafa" stroke="#b0b0b0"/><path d="M1.8 3.5 L5.2 3.5" stroke="#3858b0" stroke-width="1"/><path d="M3.5 1.8 L3.5 5.2" stroke="#3858b0" stroke-width="1"/></svg>
<svg style="position:absolute;left:57px;top:367.15px" width="12" height="12" viewBox="0 0 12 12"><rect x="2" y="0.5" width="8" height="11" rx="1" fill="#4090d8" stroke="#203040" stroke-width="0.8"/><rect x="3" y="2" width="6" height="8" fill="#78b8f0"/></svg>
<div style="left:74px;top:368.84px;font:normal 8.379888268156424px/8.379888268156424px 'Liberation Sans';color:#1a1a1a;white-space:nowrap;transform:scaleX(0.783);transform-origin:0 50%;-webkit-text-stroke:0.1px #000;">REST</div>
<div style="left:27px;top:386px;width:3px;height:1px;background:repeating-linear-gradient(to right,#c4c4c4 0 1px,#c4c4c4 1px 2px);"></div>
<svg style="position:absolute;left:19px;top:382px" width="8" height="8" viewBox="0 0 8 8"><rect x="0.5" y="0.5" width="6" height="6" rx="1" fill="#fafafa" stroke="#b0b0b0"/><path d="M1.8 3.5 L5.2 3.5" stroke="#3858b0" stroke-width="1"/><path d="M3.5 1.8 L3.5 5.2" stroke="#3858b0" stroke-width="1"/></svg>
<svg style="position:absolute;left:31px;top:379.8px" width="12" height="12" viewBox="0 0 12 12"><path d="M5 1 L11 1 L8 9 C7 11.5 3 12 1 10.5 L2.5 8 C3.5 9 5 9 5.5 8 L7.5 3 L4.5 3 Z" fill="#303030"/></svg>
<div style="left:47.3px;top:381.49px;font:normal 8.379888268156424px/8.379888268156424px 'Liberation Sans';color:#1a1a1a;white-space:nowrap;transform:scaleX(0.868);transform-origin:0 50%;-webkit-text-stroke:0.1px #000;">Jasic Vorlagen</div>
<div style="left:27px;top:398px;width:3px;height:1px;background:repeating-linear-gradient(to right,#c4c4c4 0 1px,#c4c4c4 1px 2px);"></div>
<svg style="position:absolute;left:19px;top:394px" width="8" height="8" viewBox="0 0 8 8"><rect x="0.5" y="0.5" width="6" height="6" rx="1" fill="#fafafa" stroke="#b0b0b0"/><path d="M1.8 3.5 L5.2 3.5" stroke="#3858b0" stroke-width="1"/><path d="M3.5 1.8 L3.5 5.2" stroke="#3858b0" stroke-width="1"/></svg>
<svg style="position:absolute;left:31px;top:392.45px" width="12" height="12" viewBox="0 0 12 12"><rect x="0.5" y="0.5" width="10" height="11" fill="#f0f8f8" stroke="#7090a0" stroke-width="0.8"/><path d="M1.5 5 L4 8 L6 5 L9.5 7" stroke="#40a0a0" stroke-width="1" fill="none"/><path d="M1.5 7 L4 4.5 L6 8 L9.5 4" stroke="#4080c0" stroke-width="0.8" fill="none"/></svg>
<div style="left:47.3px;top:394.14px;font:normal 8.379888268156424px/8.379888268156424px 'Liberation Sans';color:#1a1a1a;white-space:nowrap;transform:scaleX(0.871);transform-origin:0 50%;-webkit-text-stroke:0.1px #000;">Graphen</div>
<div style="left:27px;top:411px;width:3px;height:1px;background:repeating-linear-gradient(to right,#c4c4c4 0 1px,#c4c4c4 1px 2px);"></div>
<svg style="position:absolute;left:19px;top:407px" width="8" height="8" viewBox="0 0 8 8"><rect x="0.5" y="0.5" width="6" height="6" rx="1" fill="#fafafa" stroke="#b0b0b0"/><path d="M1.8 3.5 L5.2 3.5" stroke="#3858b0" stroke-width="1"/><path d="M3.5 1.8 L3.5 5.2" stroke="#3858b0" stroke-width="1"/></svg>
<svg style="position:absolute;left:31px;top:405.1px" width="12" height="12" viewBox="0 0 12 12"><rect x="0.5" y="0.5" width="5" height="4" fill="#2040e0"/><rect x="7" y="2" width="4.5" height="4" fill="#2040e0"/><rect x="2" y="8" width="8" height="3.5" fill="#2040e0"/><path d="M3 4.5 L3 8 M9 6 L9 8" stroke="#2040e0"/></svg>
<div style="left:47.3px;top:406.79px;font:normal 8.379888268156424px/8.379888268156424px 'Liberation Sans';color:#1a1a1a;white-space:nowrap;transform:scaleX(0.884);transform-origin:0 50%;-webkit-text-stroke:0.1px #000;">Topologie</div>
<div style="left:27px;top:424px;width:3px;height:1px;background:repeating-linear-gradient(to right,#c4c4c4 0 1px,#c4c4c4 1px 2px);"></div>
<svg style="position:absolute;left:19px;top:420px" width="8" height="8" viewBox="0 0 8 8"><rect x="0.5" y="0.5" width="6" height="6" rx="1" fill="#fafafa" stroke="#b0b0b0"/><path d="M1.8 3.5 L5.2 3.5" stroke="#3858b0" stroke-width="1"/><path d="M3.5 1.8 L3.5 5.2" stroke="#3858b0" stroke-width="1"/></svg>
<svg style="position:absolute;left:31px;top:417.75px" width="12" height="12" viewBox="0 0 12 12"><rect x="0.5" y="0.5" width="10" height="11" fill="#eef4f4" stroke="#607080" stroke-width="0.8"/><rect x="2" y="6" width="1.8" height="5" fill="#48b050"/><rect x="4.5" y="4" width="1.8" height="7" fill="#e0c040"/><rect x="7" y="2" width="1.8" height="9" fill="#48b050"/></svg>
<div style="left:47.3px;top:419.44px;font:normal 8.379888268156424px/8.379888268156424px 'Liberation Sans';color:#1a1a1a;white-space:nowrap;transform:scaleX(0.912);transform-origin:0 50%;-webkit-text-stroke:0.1px #000;">Exporte &amp; Reporte</div>
<div style="left:22px;top:436px;width:9px;height:1px;background:repeating-linear-gradient(to right,#c4c4c4 0 1px,#c4c4c4 1px 2px);"></div>
<svg style="position:absolute;left:31px;top:430.4px" width="12" height="12" viewBox="0 0 12 12"><path d="M2 12 L2 5 C2 1 10 1 10 5 L10 12 Z" fill="#f0f020" stroke="#c8b010" stroke-width="0.8"/><ellipse cx="5" cy="5" rx="1.5" ry="2" fill="#fff8a0"/></svg>
<div style="left:47.3px;top:432.09px;font:normal 8.379888268156424px/8.379888268156424px 'Liberation Sans';color:#1a1a1a;white-space:nowrap;transform:scaleX(0.887);transform-origin:0 50%;-webkit-text-stroke:0.1px #000;">Alarm-Management</div>
<div style="left:2px;top:439.5px;width:168px;height:3.5px;background:#f0f0f0;border-top:1px solid #a0a4a8;"></div>
<div style="left:2px;top:443px;width:168px;height:385px;border:1px solid #a0a4a8;border-radius:3px 3px 2px 2px;background:#fff;"></div>
<div style="left:3px;top:444px;width:166px;height:13.5px;background:linear-gradient(#f4f4f4,#dadada);border-bottom:1px solid #b8bcc0;"></div>
<div style="left:3px;top:444px;width:90px;height:13.5px;background:#fafafa;border-right:1px solid #c0c4c8;"></div>
<div style="left:6px;top:447.08px;font:bold 9.4355px/9.4355px 'Liberation Sans';color:#1a1a1a;white-space:nowrap;transform:scaleX(0.885);transform-origin:0 50%;-webkit-text-stroke:0.1px #000;">Wertebaumfenster</div>
<svg style="position:absolute;left:84px;top:448px" width="6" height="6" viewBox="0 0 6 6"><g fill="#5a5a5a"><rect x="0.5" y="0.5" width="2" height="2"/><rect x="3.5" y="0.5" width="2" height="2"/><rect x="0.5" y="3.5" width="2" height="2"/><rect x="3.5" y="3.5" width="2" height="2"/><rect x="2" y="2" width="2" height="2" fill="#787878"/></g></svg>
<div style="left:158px;top:447px;width:8px;height:7px;border:1px solid #606060;border-radius:1px;background:linear-gradient(#fafafa,#d8d8d8);"></div>
<div style="left:160px;top:451px;width:4px;height:1px;background:#303030;"></div>
<div style="left:3px;top:457.5px;width:166px;height:20.0px;background:#ececec;"></div>
<div style="left:6px;top:462.15px;font:normal 8.475px/8.475px 'Liberation Sans';color:#1a1a1a;white-space:nowrap;transform:scaleX(0.885);transform-origin:0 50%;-webkit-text-stroke:0.1px #000;">Online Werte</div>
<div style="left:53px;top:459.5px;width:63.5px;height:13.0px;border:1px solid #7a7a7a;border-radius:3px;background:linear-gradient(#d8d8d8,#e8e8e8);box-shadow:inset 1px 1px 1px #b0b0b0;"></div>
<div style="left:55px;top:462.35px;font:normal 8.475px/8.475px 'Liberation Sans';color:#1a1a1a;white-space:nowrap;transform:scaleX(0.885);transform-origin:0 50%;-webkit-text-stroke:0.1px #000;">Historische Werte</div>
<div style="left:3px;top:483.5px;width:166px;height:10.0px;background:linear-gradient(#ffffff,#eef0f3);border-bottom:1px solid #d8dadd;"></div>
<div style="left:6px;top:484.24px;font:normal 8.700999999999999px/8.700999999999999px 'Liberation Sans';color:#1a1a1a;white-space:nowrap;transform:scaleX(0.885);transform-origin:0 50%;-webkit-text-stroke:0.1px #000;">Gerät-50</div>
<div style="left:3px;top:510.2px;width:166px;height:1.0px;background:#ededed;"></div>
<svg style="position:absolute;left:3px;top:498px" width="8" height="8" viewBox="0 0 8 8"><rect x="0.5" y="0.5" width="6" height="6" rx="1" fill="#fafafa" stroke="#b0b0b0"/><path d="M1.8 3.5 L5.2 3.5" stroke="#3858b0" stroke-width="1"/><path d="M3.5 1.8 L3.5 5.2" stroke="#3858b0" stroke-width="1"/></svg>
<svg style="position:absolute;left:11px;top:496.8px" width="11" height="12" viewBox="0 0 11 12"><path d="M0.5 2 L4 1 L4.5 2 L9 2 L9 10 L2 11 Z" fill="#e8c858" stroke="#c8a030" stroke-width="0.6"/><path d="M3 3 L6 2 L6 11 L3 11.5 Z" fill="#f8e088"/><circle cx="8.5" cy="8.5" r="2.3" fill="#f8e8a0"/></svg>
<div style="left:23.7px;top:498.54px;font:normal 8.700999999999999px/8.700999999999999px 'Liberation Sans';color:#1a1a1a;white-space:nowrap;transform:scaleX(0.885);transform-origin:0 50%;-webkit-text-stroke:0.1px #000;">Spannung</div>
<div style="left:3px;top:525.6px;width:166px;height:1.0px;background:#ededed;"></div>
<svg style="position:absolute;left:3px;top:514px" width="8" height="8" viewBox="0 0 8 8"><rect x="0.5" y="0.5" width="6" height="6" rx="1" fill="#fafafa" stroke="#b0b0b0"/><path d="M1.8 3.5 L5.2 3.5" stroke="#3858b0" stroke-width="1"/><path d="M3.5 1.8 L3.5 5.2" stroke="#3858b0" stroke-width="1"/></svg>
<svg style="position:absolute;left:11px;top:512.2px" width="11" height="12" viewBox="0 0 11 12"><path d="M0.5 2 L4 1 L4.5 2 L9 2 L9 10 L2 11 Z" fill="#e8c858" stroke="#c8a030" stroke-width="0.6"/><path d="M3 3 L6 2 L6 11 L3 11.5 Z" fill="#f8e088"/><circle cx="8.5" cy="8.5" r="2.3" fill="#f8e8a0"/></svg>
<div style="left:23.7px;top:513.94px;font:normal 8.700999999999999px/8.700999999999999px 'Liberation Sans';color:#1a1a1a;white-space:nowrap;transform:scaleX(0.885);transform-origin:0 50%;-webkit-text-stroke:0.1px #000;">Arbeit</div>
<div style="left:3px;top:541px;width:166px;height:1px;background:#ededed;"></div>
<svg style="position:absolute;left:3px;top:529px" width="8" height="8" viewBox="0 0 8 8"><rect x="0.5" y="0.5" width="6" height="6" rx="1" fill="#fafafa" stroke="#b0b0b0"/><path d="M1.8 3.5 L5.2 3.5" stroke="#3858b0" stroke-width="1"/><path d="M3.5 1.8 L3.5 5.2" stroke="#3858b0" stroke-width="1"/></svg>
<svg style="position:absolute;left:11px;top:527.5px" width="11" height="12" viewBox="0 0 11 12"><path d="M0.5 2 L4 1 L4.5 2 L9 2 L9 10 L2 11 Z" fill="#e8c858" stroke="#c8a030" stroke-width="0.6"/><path d="M3 3 L6 2 L6 11 L3 11.5 Z" fill="#f8e088"/><circle cx="8.5" cy="8.5" r="2.3" fill="#f8e8a0"/></svg>
<div style="left:23.7px;top:529.24px;font:normal 8.700999999999999px/8.700999999999999px 'Liberation Sans';color:#1a1a1a;white-space:nowrap;transform:scaleX(0.885);transform-origin:0 50%;-webkit-text-stroke:0.1px #000;">Benutzerdefinierte Werte</div>
<div style="left:3px;top:806px;width:166px;height:21px;background:#efefef;"></div>
<svg style="position:absolute;left:5.5px;top:813px" width="12" height="12" viewBox="0 0 12 12"><circle cx="5.5" cy="5.5" r="5.2" fill="#4aa840" stroke="#6a8a6a" stroke-width="0.6"/><circle cx="5.5" cy="5.5" r="3.8" fill="#70c860"/><path d="M3 3 L5 6 M8 8 L6 5" stroke="#fff" stroke-width="1.2"/></svg>
<div style="left:20px;top:815.37px;font:normal 8.4185px/8.4185px 'Liberation Sans';color:#1a1a1a;white-space:nowrap;transform:scaleX(0.885);transform-origin:0 50%;-webkit-text-stroke:0.1px #000;">Aktualisieren</div>
<div style="left:0px;top:829px;width:1024px;height:16px;background:#f0f0f0;"></div>
<svg style="position:absolute;left:4px;top:832px" width="10" height="9" viewBox="0 0 10 9"><rect x="3" y="0.8" width="6" height="4.5" fill="none" stroke="#202020" stroke-width="1.3"/><rect x="0.8" y="3.5" width="6" height="4.5" fill="#f0f0f0" stroke="#202020" stroke-width="1.3"/></svg>
<svg style="position:absolute;left:18px;top:831px" width="12" height="13" viewBox="0 0 12 13"><rect x="0.5" y="0.5" width="10" height="11" fill="#f0f4fa" stroke="#6080a0"/><rect x="0.5" y="0.5" width="10" height="2.5" fill="#a8bcd8"/><ellipse cx="7" cy="9" rx="3.8" ry="3" fill="#e0a040"/></svg>
<div style="left:32px;top:832.74px;font:normal 8.700999999999999px/8.700999999999999px 'Liberation Sans';color:#1a1a1a;white-space:nowrap;transform:scaleX(0.885);transform-origin:0 50%;-webkit-text-stroke:0.1px #000;">Ausgabe</div>
<div style="left:843.5px;top:832.5px;width:1.0px;height:10.0px;background:#a8a8a8;"></div>
<div style="left:846px;top:832.79px;font:normal 8.588px/8.588px 'Liberation Sans';color:#1a1a1a;white-space:nowrap;transform:scaleX(0.885);transform-origin:0 50%;-webkit-text-stroke:0.1px #000;">17.01.2017 10:51:19 MEZ (GMT+01:00)&nbsp; (Preview)</div>
<div style="left:173px;top:74.5px;width:849px;height:753.5px;border:1px solid #a0a4a8;background:#f0f0f0;"></div>
<div style="left:173px;top:61px;width:86px;height:14px;background:linear-gradient(#f4f9fd,#dcecf8);border:1px solid #90a8c0;border-bottom:none;border-radius:2px 2px 0 0;"></div>
<div style="left:178px;top:64.46px;font:normal 8.644499999999999px/8.644499999999999px 'Liberation Sans';color:#1a1a1a;white-space:nowrap;transform:scaleX(0.885);transform-origin:0 50%;-webkit-text-stroke:0.1px #000;">Übersichtsfenster</div>
<svg style="position:absolute;left:249px;top:65.5px" width="6" height="6" viewBox="0 0 6 6"><g fill="#5a5a5a"><rect x="0.5" y="0.5" width="2" height="2"/><rect x="3.5" y="0.5" width="2" height="2"/><rect x="0.5" y="3.5" width="2" height="2"/><rect x="3.5" y="3.5" width="2" height="2"/><rect x="2" y="2" width="2" height="2" fill="#787878"/></g></svg>
<div style="left:259px;top:61px;width:117px;height:14px;background:linear-gradient(#f2f2f2,#d0d0d0);border:1px solid #a8acb0;border-bottom:none;border-left:none;"></div>
<div style="left:264px;top:64.37px;font:normal 8.836599999999999px/8.836599999999999px 'Liberation Sans';color:#1a1a1a;white-space:nowrap;transform:scaleX(0.885);transform-origin:0 50%;-webkit-text-stroke:0.1px #000;">Werte editieren [Gerät-50]</div>
<svg style="position:absolute;left:367.5px;top:65.5px" width="6" height="6" viewBox="0 0 6 6"><g fill="#5a5a5a"><rect x="0.5" y="0.5" width="2" height="2"/><rect x="3.5" y="0.5" width="2" height="2"/><rect x="0.5" y="3.5" width="2" height="2"/><rect x="3.5" y="3.5" width="2" height="2"/><rect x="2" y="2" width="2" height="2" fill="#787878"/></g></svg>
<div style="left:973px;top:61px;width:21px;height:10.5px;border:1px solid #909090;border-radius:2px;background:linear-gradient(#f4f4f4,#d8d8d8);"></div>
<div style="left:983.3px;top:62px;width:0.7000000000000455px;height:9px;background:#a0a0a0;"></div>
<svg style="position:absolute;left:976px;top:62px" width="16" height="9" viewBox="0 0 16 9"><path d="M5 1.5 L2.5 4.5 L5 7.5 Z" fill="#a8a8a8"/><path d="M11 1.5 L13.5 4.5 L11 7.5 Z" fill="#a8a8a8"/></svg>
<div style="left:996px;top:61px;width:12px;height:10.5px;border:1px solid #909090;border-radius:2px;background:linear-gradient(#f4f4f4,#d8d8d8);"></div>
<svg style="position:absolute;left:998px;top:63px" width="8" height="6" viewBox="0 0 8 6"><path d="M1 1.5 L7 1.5 L4 5 Z" fill="#202830"/></svg>
<div style="left:1010px;top:61px;width:12px;height:10.5px;border:1px solid #909090;border-radius:2px;background:linear-gradient(#f4f4f4,#d8d8d8);"></div>
<svg style="position:absolute;left:1012px;top:62.5px" width="8" height="8" viewBox="0 0 8 8"><rect x="2.5" y="0.8" width="5" height="3.5" fill="none" stroke="#202020" stroke-width="1.2"/><rect x="0.8" y="3" width="5" height="4" fill="#e8e8e8" stroke="#202020" stroke-width="1.2"/></svg>
<div style="left:174px;top:75.5px;width:847px;height:61.5px;background:#f4f4f4;"></div>
<div style="left:174px;top:75.5px;width:516px;height:61.5px;background:linear-gradient(#f8f8f8,#e6e6e6);"></div>
<div style="left:174px;top:137px;width:847px;height:1px;background:#c4c4c4;"></div>
<div style="left:174px;top:138px;width:847px;height:1px;background:#fbfbfb;"></div>
<div style="left:178.3px;top:78px;width:63.69999999999999px;height:56px;border:1px solid #b4b4b4;border-radius:1px;background:linear-gradient(#f8f8f8,#e8e8e8);"></div>
<div style="left:10.099999999999994px;width:400px;text-align:center;top:120.34px;font:normal 9.717999999999998px/9.717999999999998px 'Liberation Sans';color:#2a2a2a;white-space:nowrap;transform:scaleX(0.885);transform-origin:50% 50%;-webkit-text-stroke:0.1px #000;">Konfiguration</div>
<div style="left:244.8px;top:78px;width:63.80000000000001px;height:56px;border:1px solid #b4b4b4;border-radius:1px;background:linear-gradient(#f8f8f8,#e8e8e8);"></div>
<div style="left:76.69999999999999px;width:400px;text-align:center;top:120.45px;font:normal 9.491999999999999px/9.491999999999999px 'Liberation Sans';color:#2a2a2a;white-space:nowrap;transform:scaleX(0.885);transform-origin:50% 50%;-webkit-text-stroke:0.1px #000;">Gerät löschen</div>
<div style="left:311.5px;top:78px;width:46.5px;height:56px;border:1px solid #b4b4b4;border-radius:1px;background:linear-gradient(#f8f8f8,#e8e8e8);"></div>
<div style="left:134.75px;width:400px;text-align:center;top:120.45px;font:normal 9.491999999999999px/9.491999999999999px 'Liberation Sans';color:#2a2a2a;white-space:nowrap;transform:scaleX(0.885);transform-origin:50% 50%;-webkit-text-stroke:0.1px #000;">Editieren</div>
<svg style="position:absolute;left:185px;top:78px" width="50" height="42" viewBox="0 0 50 42"><defs><linearGradient id="ag" x1="0" y1="0" x2="0" y2="1"><stop offset="0" stop-color="#7ab4f8"/><stop offset="0.5" stop-color="#3a7ce0"/><stop offset="1" stop-color="#2a5cc0"/></linearGradient></defs><rect x="12.7" y="8.9" width="27.3" height="27.1" rx="0.8" fill="#5a9ad0" stroke="#2a4a60" stroke-width="0.9"/><rect x="15" y="12" width="22.5" height="16.8" fill="#dde2f4" stroke="#30343c" stroke-width="0.8"/><rect x="15.3" y="12.3" width="5.5" height="16.2" fill="#f8f8fc"/><g fill="#e8e0c8"><circle cx="20.4" cy="31.8" r="1.1"/><circle cx="24.4" cy="31.8" r="1.1"/><circle cx="28.1" cy="31.8" r="1.1"/><circle cx="32" cy="31.8" r="1.1"/></g><g fill="#304838"><circle cx="16.4" cy="31.8" r="1"/><circle cx="36" cy="31.8" r="1"/></g><path d="M9.2 15.9 L20.9 15.9 L20.9 12.7 L28.8 20.2 L20.9 27.6 L20.9 24.4 L9.2 24.4 Z" fill="url(#ag)" stroke="#2a58b0" stroke-width="0.5"/></svg>
<svg style="position:absolute;left:255px;top:78px" width="50" height="42" viewBox="0 0 50 42"><defs><linearGradient id="xg" x1="0" y1="0" x2="1" y2="1"><stop offset="0" stop-color="#e05050"/><stop offset="0.6" stop-color="#ee2828"/><stop offset="1" stop-color="#b81010"/></linearGradient></defs><rect x="8.9" y="7.7" width="27.1" height="27.1" rx="0.8" fill="#5a9ad0" stroke="#2a4a60" stroke-width="0.9"/><rect x="11.2" y="10.4" width="22.6" height="17.2" fill="#dde2f4" stroke="#30343c" stroke-width="0.7"/><g fill="#e8e0c8"><circle cx="20.4" cy="30.3" r="1.1"/><circle cx="24.4" cy="30.3" r="1.1"/></g><g fill="#304838"><circle cx="12.7" cy="30.3" r="1"/><circle cx="32.3" cy="30.3" r="1"/></g><g stroke="#8a1010" stroke-width="6.8" stroke-linecap="round"><path d="M16.2 14.2 L29.2 28.2 M29.2 14.2 L16.2 28.2"/></g><g stroke="url(#xg)" stroke-width="5.4" stroke-linecap="round"><path d="M16.2 14.2 L29.2 28.2 M29.2 14.2 L16.2 28.2"/></g></svg>
<svg style="position:absolute;left:310px;top:78px" width="50" height="42" viewBox="0 0 50 42"><defs><linearGradient id="pg" x1="0" y1="0" x2="1" y2="0"><stop offset="0" stop-color="#f8d820"/><stop offset="1" stop-color="#d8a000"/></linearGradient></defs><path d="M16 32 L37 37.5 L40 35 L38 8 Z" fill="#909090" opacity="0.35"/><path d="M13 30.3 L36.3 36.3 L37.2 35.3 L37.2 6.6 L36.8 6.5 Z" fill="#506070"/><path d="M14.4 4.5 L36.3 6.5 L36 34.8 L12.9 29.8 Z" fill="#fbfcfe" stroke="#8898a8" stroke-width="0.5"/><g stroke="#b8c8e0" stroke-width="0.6"><path d="M15 10 L35.5 11.5 M15 12.8 L35.5 14.3 M15 15.6 L35.5 17.1 M15 18.4 L35.5 19.9 M15 21.2 L35.5 22.7 M14.5 24 L35.5 25.5 M14.5 26.8 L35.5 28.3"/></g><path d="M18.4 8 L18.2 29" stroke="#e88080" stroke-width="0.6"/><path d="M12.9 29.8 L36 34.8 L36.3 36.8 L13.2 31.6 Z" fill="#5a6a78"/><path d="M36 6.5 L37.3 7 L37.3 36 L36.2 36.6 Z" fill="#5a6a78"/><path d="M14.6 4.3 L35.8 6.3 L35.8 7.5 L14.5 5.6 Z" fill="#303838"/><path d="M10.2 9.6 L13.6 7.4 L25.4 25.6 L25 28.2 L22.6 27.2 Z" fill="url(#pg)" stroke="#a07800" stroke-width="0.5"/><path d="M10.2 9.6 L13.6 7.4 L15 9.6 L11.6 11.8 Z" fill="#e8e8e8"/><circle cx="10.7" cy="7.7" r="2.8" fill="#d82020"/><circle cx="10" cy="7" r="1" fill="#f08080"/></svg>
<div style="left:180.5px;top:140.5px;width:833.8px;height:114.30000000000001px;border:3.5px solid #fff;background:#f0f0f0;"></div>
<div style="left:187px;top:147px;width:188px;height:101px;border:1px solid #b4b4b4;background:#fff;"></div>
<div style="left:378.5px;top:147px;width:170.5px;height:101px;border:1px solid #b4b4b4;background:#fff;"></div>
<svg style="position:absolute;left:194px;top:150px" width="50" height="50" viewBox="0 0 50 50"><g fill="none" stroke="#161616" stroke-width="2.3" stroke-linejoin="round"><path d="M13.9 10.9 L13.9 5.6 L39.8 5.6 Q40 5.6 40 7 L40 10.9 M23 5.6 L23 10.9 M31.1 5.6 L31.1 10.9"/><path d="M13 14.3 L40.8 14.3 M22.7 14.3 L22.7 16.9 M31.1 14.3 L31.1 16.9 M39.6 14.3 L39.6 16.9"/><path d="M10.9 14.3 L5.4 14.3 L5.4 38.5 Q5.4 39.9 7 39.9 L10.9 39.9 M5.4 22.8 L10.9 22.8 M5.4 31 L10.9 31"/><path d="M14 14.3 L14 40 M14 22.8 L16.9 22.8 M14 31 L16.9 31 M14 39.9 L16.9 39.9"/></g><path d="M4.4 10.9 L4.4 6.5 Q4.4 4.7 6.2 4.7 L10.7 4.7 L10.7 10.9 Z" fill="#161616"/><rect x="19.8" y="20.1" width="22.8" height="22.5" rx="0.8" fill="#fff" stroke="#161616" stroke-width="2.8"/><path d="M21 40 L23.7 32 L29.6 38.3 L32.8 32.2 L35.5 35.3 L39.3 24.9" fill="none" stroke="#161616" stroke-width="2.3" stroke-linejoin="round"/></svg>
<div style="left:246.8px;top:154.80px;font:bold 13.676367214958526px/13.676367214958526px 'Liberation Serif';color:#000;white-space:nowrap;transform:scaleX(1.0);">DI</div>
<div style="left:253px;top:172.04px;font:normal 8.700999999999999px/8.700999999999999px 'Liberation Sans';color:#1a1a1a;white-space:nowrap;transform:scaleX(0.885);transform-origin:0 50%;-webkit-text-stroke:0.1px #000;">Gerät-50</div>
<div style="left:253px;top:195.93px;font:normal 8.927px/8.927px 'Liberation Sans';color:#1a1a1a;white-space:nowrap;transform:scaleX(0.885);transform-origin:0 50%;-webkit-text-stroke:0.1px #000;">Letzter Wert:</div>
<div style="left:304px;top:195.95px;font:normal 8.8818px/8.8818px 'Liberation Sans';color:#1a1a1a;white-space:nowrap;transform:scaleX(0.885);transform-origin:0 50%;-webkit-text-stroke:0.1px #000;">17.01.17 10:48:47</div>
<div style="left:253px;top:209.83px;font:normal 8.927px/8.927px 'Liberation Sans';color:#1a1a1a;white-space:nowrap;transform:scaleX(0.885);transform-origin:0 50%;-webkit-text-stroke:0.1px #000;">Zeitplan:</div>
<div style="left:302.5px;top:209.83px;font:normal 8.927px/8.927px 'Liberation Sans';color:#1a1a1a;white-space:nowrap;transform:scaleX(0.885);transform-origin:0 50%;-webkit-text-stroke:0.1px #000;">Kein Zeitplan</div>
<div style="left:398px;top:157.18px;font:normal 8.6106px/8.6106px 'Liberation Sans';color:#1a1a1a;white-space:nowrap;transform:scaleX(0.885);transform-origin:0 50%;-webkit-text-stroke:0.1px #000;">Hardwarerevision:</div>
<div style="left:883.8px;top:208.10px;font:normal 7.344999999999999px/7.344999999999999px 'Liberation Sans';color:#111;white-space:nowrap;transform:scaleX(0.885);transform-origin:0 50%;-webkit-text-stroke:0.2px #222;">Seriennummer:</div>
<div style="left:883.8px;top:222.90px;font:normal 7.344999999999999px/7.344999999999999px 'Liberation Sans';color:#111;white-space:nowrap;transform:scaleX(0.885);transform-origin:0 50%;-webkit-text-stroke:0.2px #222;">Firmwareversion:</div>
<div style="left:883.8px;top:237.50px;font:normal 7.344999999999999px/7.344999999999999px 'Liberation Sans';color:#111;white-space:nowrap;transform:scaleX(0.885);transform-origin:0 50%;-webkit-text-stroke:0.2px #222;">Verbindung:</div>
<div style="left:942.2px;top:237.68px;font:bold 6.983240223463687px/6.983240223463687px 'Liberation Sans';color:#000;white-space:nowrap;transform:scaleX(1.060);transform-origin:0 50%;-webkit-text-stroke:0.1px #000;">Nicht konfiguriert</div>
<div style="left:870.5px;top:268.5px;width:144.0px;height:559.5px;background:linear-gradient(#7ba2e6,#6a86dc 50%,#5f6dd3);border:1px solid #8a9ac0;border-bottom:none;"></div>
<div style="left:180.5px;top:284.5px;width:684.5px;height:542.0px;border:1px solid #b0b4b8;border-left:2px solid #c0c4c8;background:#f0f0f0;"></div>
<div style="left:180.5px;top:268.8px;width:66.5px;height:17.19999999999999px;border:1px solid #a8acb0;border-bottom:none;border-radius:2px 2px 0 0;background:#fff;"></div>
<div style="left:182.5px;top:285.5px;width:681.5px;height:3.5px;background:linear-gradient(#fff,#f2f2f2);"></div>
<div style="left:247px;top:284.5px;width:617px;height:1.0px;background:#b0b4b8;"></div>
<div style="left:184.8px;top:273.04px;font:normal 8.700999999999999px/8.700999999999999px 'Liberation Sans';color:#1a1a1a;white-space:nowrap;transform:scaleX(0.885);transform-origin:0 50%;-webkit-text-stroke:0.1px #000;">Energiewerte</div>
<svg style="position:absolute;left:233.5px;top:274px" width="6" height="6" viewBox="0 0 6 6"><g fill="#5a5a5a"><rect x="0.5" y="0.5" width="2" height="2"/><rect x="3.5" y="0.5" width="2" height="2"/><rect x="0.5" y="3.5" width="2" height="2"/><rect x="3.5" y="3.5" width="2" height="2"/><rect x="2" y="2" width="2" height="2" fill="#787878"/></g></svg>
<div style="left:184.8px;top:296.56px;font:normal 8.6558px/8.6558px 'Liberation Sans';color:#1a1a1a;white-space:nowrap;transform:scaleX(0.885);transform-origin:0 50%;-webkit-text-stroke:0.1px #000;">Übersichtstyp.</div>
<div style="left:245.5px;top:292.5px;width:546.0px;height:14.0px;border:1px solid #a8a8a8;border-radius:2px;background:linear-gradient(#f6f6f6 0%,#ececec 45%,#dcdcdc 55%,#e4e4e4 100%);"></div>
<div style="left:248px;top:296.56px;font:normal 8.6558px/8.6558px 'Liberation Sans';color:#1a1a1a;white-space:nowrap;transform:scaleX(0.885);transform-origin:0 50%;-webkit-text-stroke:0.1px #000;">Monatsübersicht</div>
<svg style="position:absolute;left:782px;top:298.3px" width="7" height="5" viewBox="0 0 7 5"><path d="M0.5 0.5 L6.5 0.5 L3.5 4 Z" fill="#111"/></svg>
<div style="left:184.8px;top:317.06px;font:normal 8.6558px/8.6558px 'Liberation Sans';color:#1a1a1a;white-space:nowrap;transform:scaleX(0.885);transform-origin:0 50%;-webkit-text-stroke:0.1px #000;">Energie Werte:</div>
<div style="left:245.5px;top:313.0px;width:546.0px;height:14.0px;border:1px solid #a8a8a8;border-radius:2px;background:linear-gradient(#f6f6f6 0%,#ececec 45%,#dcdcdc 55%,#e4e4e4 100%);"></div>
<div style="left:248px;top:317.06px;font:normal 8.6558px/8.6558px 'Liberation Sans';color:#1a1a1a;white-space:nowrap;transform:scaleX(0.885);transform-origin:0 50%;-webkit-text-stroke:0.1px #000;">Bitte wählen Sie einen Wert aus.</div>
<svg style="position:absolute;left:782px;top:318.8px" width="7" height="5" viewBox="0 0 7 5"><path d="M0.5 0.5 L6.5 0.5 L3.5 4 Z" fill="#111"/></svg>
<div style="left:184.8px;top:337.46px;font:normal 8.6558px/8.6558px 'Liberation Sans';color:#1a1a1a;white-space:nowrap;transform:scaleX(0.885);transform-origin:0 50%;-webkit-text-stroke:0.1px #000;">Leistungs Werte:</div>
<div style="left:245.5px;top:333.4px;width:546.0px;height:14.0px;border:1px solid #a8a8a8;border-radius:2px;background:linear-gradient(#f6f6f6 0%,#ececec 45%,#dcdcdc 55%,#e4e4e4 100%);"></div>
<div style="left:248px;top:337.46px;font:normal 8.6558px/8.6558px 'Liberation Sans';color:#1a1a1a;white-space:nowrap;transform:scaleX(0.885);transform-origin:0 50%;-webkit-text-stroke:0.1px #000;">Platinen</div>
<svg style="position:absolute;left:782px;top:339.2px" width="7" height="5" viewBox="0 0 7 5"><path d="M0.5 0.5 L6.5 0.5 L3.5 4 Z" fill="#111"/></svg>
<div style="left:795.5px;top:292.3px;width:64.0px;height:15.199999999999989px;border:1px solid #8a8a8a;border-radius:3px;background:linear-gradient(#f6f6f6,#e6e6e6 50%,#d8d8d8);"></div>
<div style="left:627.5px;width:400px;text-align:center;top:296.30px;font:normal 8.565399999999999px/8.565399999999999px 'Liberation Sans';color:#1a1a1a;white-space:nowrap;transform:scaleX(0.885);transform-origin:50% 50%;-webkit-text-stroke:0.1px #000;">Übernehmen</div>
<div style="left:826.5px;top:313.5px;width:33.0px;height:15.5px;border:1px solid #8a8a8a;border-radius:3px;background:linear-gradient(#f6f6f6,#e6e6e6 50%,#d8d8d8);"></div>
<svg style="position:absolute;left:836px;top:316px" width="12" height="11" viewBox="0 0 12 11"><path d="M2 3 L6 1 L11 1 L11 8 L7 10 L2 10 Z" fill="#d8d8d8" stroke="#606060" stroke-width="0.8"/><path d="M2 3 L7 3 L11 1 M7 3 L7 10" stroke="#606060" stroke-width="0.8" fill="none"/><rect x="3" y="5" width="3" height="3" fill="#a0a0a0"/></svg>
<div style="left:74.10000000000002px;width:400px;text-align:center;top:357.18px;font:normal 8.813999999999998px/8.813999999999998px 'Liberation Sans';color:#1a1a1a;white-space:nowrap;transform:scaleX(0.885);transform-origin:50% 50%;-webkit-text-stroke:0.1px #000;">Jahr</div>
<div style="left:126.69999999999999px;width:400px;text-align:center;top:357.18px;font:normal 8.813999999999998px/8.813999999999998px 'Liberation Sans';color:#1a1a1a;white-space:nowrap;transform:scaleX(0.885);transform-origin:50% 50%;-webkit-text-stroke:0.1px #000;">Monat</div>
<div style="left:180.3px;width:400px;text-align:center;top:357.18px;font:normal 8.813999999999998px/8.813999999999998px 'Liberation Sans';color:#1a1a1a;white-space:nowrap;transform:scaleX(0.885);transform-origin:50% 50%;-webkit-text-stroke:0.1px #000;">Tag</div>
<div style="left:249.5px;top:370.3px;width:49.5px;height:18.19999999999999px;border:1px solid #b8b8b8;border-radius:2px;background:#fff;"></div>
<div style="left:-114.5px;width:400px;text-align:right;top:375.88px;font:normal 8.813999999999998px/8.813999999999998px 'Liberation Sans';color:#1a1a1a;white-space:nowrap;transform:scaleX(0.885);transform-origin:100% 50%;-webkit-text-stroke:0.1px #000;">2016</div>
<div style="left:288px;top:371.8px;width:9.5px;height:7.599999999999966px;border:1px solid #c4c4c4;background:linear-gradient(#fafafa,#e8e8e8);"></div>
<div style="left:288px;top:379.4px;width:9.5px;height:7.600000000000023px;border:1px solid #c4c4c4;border-top:none;background:linear-gradient(#fafafa,#e8e8e8);"></div>
<svg style="position:absolute;left:290px;top:372.8px" width="6" height="13" viewBox="0 0 6 13"><path d="M0.5 3.5 L3 1 L5.5 3.5 Z" fill="#3050b0"/><path d="M0.5 9.5 L3 12 L5.5 9.5 Z" fill="#3050b0"/></svg>
<div style="left:249.5px;top:398.1px;width:49.5px;height:18.299999999999955px;border:1px solid #b8b8b8;border-radius:2px;background:#f0f0f0;"></div>
<div style="left:251.0px;top:399.6px;width:37.0px;height:15.299999999999955px;border:1px solid #d8d8d8;background:#efefef;"></div>
<div style="left:-114.5px;width:400px;text-align:right;top:403.73px;font:normal 8.813999999999998px/8.813999999999998px 'Liberation Sans';color:#909090;white-space:nowrap;transform:scaleX(0.885);transform-origin:100% 50%;">2016</div>
<div style="left:288px;top:399.6px;width:9.5px;height:7.649999999999977px;border:1px solid #c4c4c4;background:linear-gradient(#fafafa,#e8e8e8);"></div>
<div style="left:288px;top:407.25px;width:9.5px;height:7.649999999999977px;border:1px solid #c4c4c4;border-top:none;background:linear-gradient(#fafafa,#e8e8e8);"></div>
<svg style="position:absolute;left:290px;top:400.6px" width="6" height="13" viewBox="0 0 6 13"><path d="M0.5 3.5 L3 1 L5.5 3.5 Z" fill="#a0a0a0"/><path d="M0.5 9.5 L3 12 L5.5 9.5 Z" fill="#a0a0a0"/></svg>
<div style="left:303px;top:370.3px;width:48.60000000000002px;height:18.19999999999999px;border:1px solid #b8b8b8;border-radius:2px;background:#fff;"></div>
<div style="left:-61.89999999999998px;width:400px;text-align:right;top:375.88px;font:normal 8.813999999999998px/8.813999999999998px 'Liberation Sans';color:#1a1a1a;white-space:nowrap;transform:scaleX(0.885);transform-origin:100% 50%;-webkit-text-stroke:0.1px #000;">10</div>
<div style="left:340.6px;top:371.8px;width:9.5px;height:7.599999999999966px;border:1px solid #c4c4c4;background:linear-gradient(#fafafa,#e8e8e8);"></div>
<div style="left:340.6px;top:379.4px;width:9.5px;height:7.600000000000023px;border:1px solid #c4c4c4;border-top:none;background:linear-gradient(#fafafa,#e8e8e8);"></div>
<svg style="position:absolute;left:342.6px;top:372.8px" width="6" height="13" viewBox="0 0 6 13"><path d="M0.5 3.5 L3 1 L5.5 3.5 Z" fill="#3050b0"/><path d="M0.5 9.5 L3 12 L5.5 9.5 Z" fill="#3050b0"/></svg>
<div style="left:303px;top:398.1px;width:48.60000000000002px;height:18.299999999999955px;border:1px solid #b8b8b8;border-radius:2px;background:#f0f0f0;"></div>
<div style="left:304.5px;top:399.6px;width:36.10000000000002px;height:15.299999999999955px;border:1px solid #d8d8d8;background:#efefef;"></div>
<div style="left:-61.89999999999998px;width:400px;text-align:right;top:403.73px;font:normal 8.813999999999998px/8.813999999999998px 'Liberation Sans';color:#909090;white-space:nowrap;transform:scaleX(0.885);transform-origin:100% 50%;">1</div>
<div style="left:340.6px;top:399.6px;width:9.5px;height:7.649999999999977px;border:1px solid #c4c4c4;background:linear-gradient(#fafafa,#e8e8e8);"></div>
<div style="left:340.6px;top:407.25px;width:9.5px;height:7.649999999999977px;border:1px solid #c4c4c4;border-top:none;background:linear-gradient(#fafafa,#e8e8e8);"></div>
<svg style="position:absolute;left:342.6px;top:400.6px" width="6" height="13" viewBox="0 0 6 13"><path d="M0.5 3.5 L3 1 L5.5 3.5 Z" fill="#a0a0a0"/><path d="M0.5 9.5 L3 12 L5.5 9.5 Z" fill="#a0a0a0"/></svg>
<div style="left:356px;top:370.3px;width:49.5px;height:18.19999999999999px;border:1px solid #b8b8b8;border-radius:2px;background:#f0f0f0;"></div>
<div style="left:357.5px;top:371.8px;width:37.0px;height:15.199999999999989px;border:1px solid #d8d8d8;background:#efefef;"></div>
<div style="left:-8.0px;width:400px;text-align:right;top:375.88px;font:normal 8.813999999999998px/8.813999999999998px 'Liberation Sans';color:#909090;white-space:nowrap;transform:scaleX(0.885);transform-origin:100% 50%;">17</div>
<div style="left:394.5px;top:371.8px;width:9.5px;height:7.599999999999966px;border:1px solid #c4c4c4;background:linear-gradient(#fafafa,#e8e8e8);"></div>
<div style="left:394.5px;top:379.4px;width:9.5px;height:7.600000000000023px;border:1px solid #c4c4c4;border-top:none;background:linear-gradient(#fafafa,#e8e8e8);"></div>
<svg style="position:absolute;left:396.5px;top:372.8px" width="6" height="13" viewBox="0 0 6 13"><path d="M0.5 3.5 L3 1 L5.5 3.5 Z" fill="#a0a0a0"/><path d="M0.5 9.5 L3 12 L5.5 9.5 Z" fill="#a0a0a0"/></svg>
<div style="left:356px;top:398.1px;width:49.5px;height:18.299999999999955px;border:1px solid #b8b8b8;border-radius:2px;background:#f0f0f0;"></div>
<div style="left:357.5px;top:399.6px;width:37.0px;height:15.299999999999955px;border:1px solid #d8d8d8;background:#efefef;"></div>
<div style="left:-8.0px;width:400px;text-align:right;top:403.73px;font:normal 8.813999999999998px/8.813999999999998px 'Liberation Sans';color:#909090;white-space:nowrap;transform:scaleX(0.885);transform-origin:100% 50%;">17</div>
<div style="left:394.5px;top:399.6px;width:9.5px;height:7.649999999999977px;border:1px solid #c4c4c4;background:linear-gradient(#fafafa,#e8e8e8);"></div>
<div style="left:394.5px;top:407.25px;width:9.5px;height:7.649999999999977px;border:1px solid #c4c4c4;border-top:none;background:linear-gradient(#fafafa,#e8e8e8);"></div>
<svg style="position:absolute;left:396.5px;top:400.6px" width="6" height="13" viewBox="0 0 6 13"><path d="M0.5 3.5 L3 1 L5.5 3.5 Z" fill="#a0a0a0"/><path d="M0.5 9.5 L3 12 L5.5 9.5 Z" fill="#a0a0a0"/></svg>
<div style="left:186.5px;top:403.5px;width:9.5px;height:9.5px;border:1px solid #8a8a8a;background:linear-gradient(#e8e8e8,#fafafa);"></div>
<div style="left:198px;top:404.20px;font:normal 8.362px/8.362px 'Liberation Sans';color:#1a1a1a;white-space:nowrap;transform:scaleX(0.885);transform-origin:0 50%;-webkit-text-stroke:0.1px #000;">Vergleichen</div>
<div style="left:189px;top:430px;width:671px;height:106px;background:#fff;border-left:1px solid #808080;border-top:1px solid #909090;"></div>
<svg style="position:absolute;left:180px;top:420px" width="680" height="110" viewBox="0 0 680 110"><line x1="66.19999999999999" y1="62.40" x2="676.90" y2="62.40" stroke="#a8a8a8" stroke-width="1"/><line x1="66.19999999999999" y1="37.00" x2="676.90" y2="37.00" stroke="#a8a8a8" stroke-width="1"/><line x1="85.90" y1="11.600000000000023" x2="85.90" y2="87.80000000000001" stroke="#a0a0a0" stroke-width="1"/><line x1="105.60" y1="11.600000000000023" x2="105.60" y2="87.80000000000001" stroke="#a0a0a0" stroke-width="1"/><line x1="125.30" y1="11.600000000000023" x2="125.30" y2="87.80000000000001" stroke="#a0a0a0" stroke-width="1"/><line x1="145.00" y1="11.600000000000023" x2="145.00" y2="87.80000000000001" stroke="#a0a0a0" stroke-width="1"/><line x1="164.70" y1="11.600000000000023" x2="164.70" y2="87.80000000000001" stroke="#a0a0a0" stroke-width="1"/><line x1="184.40" y1="11.600000000000023" x2="184.40" y2="87.80000000000001" stroke="#a0a0a0" stroke-width="1"/><line x1="204.10" y1="11.600000000000023" x2="204.10" y2="87.80000000000001" stroke="#a0a0a0" stroke-width="1"/><line x1="223.80" y1="11.600000000000023" x2="223.80" y2="87.80000000000001" stroke="#a0a0a0" stroke-width="1"/><line x1="243.50" y1="11.600000000000023" x2="243.50" y2="87.80000000000001" stroke="#a0a0a0" stroke-width="1"/><line x1="263.20" y1="11.600000000000023" x2="263.20" y2="87.80000000000001" stroke="#a0a0a0" stroke-width="1"/><line x1="282.90" y1="11.600000000000023" x2="282.90" y2="87.80000000000001" stroke="#a0a0a0" stroke-width="1"/><line x1="302.60" y1="11.600000000000023" x2="302.60" y2="87.80000000000001" stroke="#a0a0a0" stroke-width="1"/><line x1="322.30" y1="11.600000000000023" x2="322.30" y2="87.80000000000001" stroke="#a0a0a0" stroke-width="1"/><line x1="342.00" y1="11.600000000000023" x2="342.00" y2="87.80000000000001" stroke="#a0a0a0" stroke-width="1"/><line x1="361.70" y1="11.600000000000023" x2="361.70" y2="87.80000000000001" stroke="#a0a0a0" stroke-width="1"/><line x1="381.40" y1="11.600000000000023" x2="381.40" y2="87.80000000000001" stroke="#a0a0a0" stroke-width="1"/><line x1="401.10" y1="11.600000000000023" x2="401.10" y2="87.80000000000001" stroke="#a0a0a0" stroke-width="1"/><line x1="420.80" y1="11.600000000000023" x2="420.80" y2="87.80000000000001" stroke="#a0a0a0" stroke-width="1"/><line x1="440.50" y1="11.600000000000023" x2="440.50" y2="87.80000000000001" stroke="#a0a0a0" stroke-width="1"/><line x1="460.20" y1="11.600000000000023" x2="460.20" y2="87.80000000000001" stroke="#a0a0a0" stroke-width="1"/><line x1="479.90" y1="11.600000000000023" x2="479.90" y2="87.80000000000001" stroke="#a0a0a0" stroke-width="1"/><line x1="499.60" y1="11.600000000000023" x2="499.60" y2="87.80000000000001" stroke="#a0a0a0" stroke-width="1"/><line x1="519.30" y1="11.600000000000023" x2="519.30" y2="87.80000000000001" stroke="#a0a0a0" stroke-width="1"/><line x1="539.00" y1="11.600000000000023" x2="539.00" y2="87.80000000000001" stroke="#a0a0a0" stroke-width="1"/><line x1="558.70" y1="11.600000000000023" x2="558.70" y2="87.80000000000001" stroke="#a0a0a0" stroke-width="1"/><line x1="578.40" y1="11.600000000000023" x2="578.40" y2="87.80000000000001" stroke="#a0a0a0" stroke-width="1"/><line x1="598.10" y1="11.600000000000023" x2="598.10" y2="87.80000000000001" stroke="#a0a0a0" stroke-width="1"/><line x1="617.80" y1="11.600000000000023" x2="617.80" y2="87.80000000000001" stroke="#a0a0a0" stroke-width="1"/><line x1="637.50" y1="11.600000000000023" x2="637.50" y2="87.80000000000001" stroke="#a0a0a0" stroke-width="1"/><line x1="657.20" y1="11.600000000000023" x2="657.20" y2="87.80000000000001" stroke="#a0a0a0" stroke-width="1"/><rect x="66.20" y="31.92" width="19.70" height="55.88" fill="#ff0000" stroke="#000" stroke-width="1"/><rect x="85.90" y="82.47" width="19.70" height="5.33" fill="#ff0000" stroke="#000" stroke-width="1"/><rect x="105.60" y="31.92" width="19.70" height="55.88" fill="#ff0000" stroke="#000" stroke-width="1"/><rect x="125.30" y="31.92" width="19.70" height="55.88" fill="#ff0000" stroke="#000" stroke-width="1"/><rect x="145.00" y="31.92" width="19.70" height="55.88" fill="#ff0000" stroke="#000" stroke-width="1"/><rect x="164.70" y="31.92" width="19.70" height="55.88" fill="#ff0000" stroke="#000" stroke-width="1"/><rect x="184.40" y="31.92" width="19.70" height="55.88" fill="#ff0000" stroke="#000" stroke-width="1"/><rect x="204.10" y="31.92" width="19.70" height="55.88" fill="#ff0000" stroke="#000" stroke-width="1"/><rect x="223.80" y="31.92" width="19.70" height="55.88" fill="#ff0000" stroke="#000" stroke-width="1"/><rect x="243.50" y="31.92" width="19.70" height="55.88" fill="#ff0000" stroke="#000" stroke-width="1"/><rect x="263.20" y="31.92" width="19.70" height="55.88" fill="#ff0000" stroke="#000" stroke-width="1"/><rect x="282.90" y="87.04" width="19.70" height="0.76" fill="#ff0000" stroke="#000" stroke-width="1"/><rect x="302.60" y="31.92" width="19.70" height="55.88" fill="#ff0000" stroke="#000" stroke-width="1"/><rect x="322.30" y="31.92" width="19.70" height="55.88" fill="#ff0000" stroke="#000" stroke-width="1"/><rect x="342.00" y="31.92" width="19.70" height="55.88" fill="#ff0000" stroke="#000" stroke-width="1"/><rect x="361.70" y="83.74" width="19.70" height="4.06" fill="#ff0000" stroke="#000" stroke-width="1"/><line x1="66.19999999999999" y1="11.199999999999989" x2="676.90" y2="11.199999999999989" stroke="#222" stroke-width="1.8"/><line x1="66.19999999999999" y1="87.80000000000001" x2="676.90" y2="87.80000000000001" stroke="#222" stroke-width="1.2"/><line x1="66.19999999999999" y1="11.600000000000023" x2="66.19999999999999" y2="87.80000000000001" stroke="#222" stroke-width="1"/><line x1="61" y1="87.80" x2="66" y2="87.80" stroke="#a0a0a0" stroke-width="1"/><line x1="61" y1="62.40" x2="66" y2="62.40" stroke="#a0a0a0" stroke-width="1"/><line x1="61" y1="37.00" x2="66" y2="37.00" stroke="#a0a0a0" stroke-width="1"/><line x1="61" y1="11.60" x2="66" y2="11.60" stroke="#a0a0a0" stroke-width="1"/><line x1="66.20" y1="90" x2="66.20" y2="93.5" stroke="#909090" stroke-width="1"/><line x1="85.90" y1="90" x2="85.90" y2="99" stroke="#909090" stroke-width="1"/><line x1="105.60" y1="90" x2="105.60" y2="93.5" stroke="#909090" stroke-width="1"/><line x1="125.30" y1="90" x2="125.30" y2="99" stroke="#909090" stroke-width="1"/><line x1="145.00" y1="90" x2="145.00" y2="93.5" stroke="#909090" stroke-width="1"/><line x1="164.70" y1="90" x2="164.70" y2="99" stroke="#909090" stroke-width="1"/><line x1="184.40" y1="90" x2="184.40" y2="93.5" stroke="#909090" stroke-width="1"/><line x1="204.10" y1="90" x2="204.10" y2="99" stroke="#909090" stroke-width="1"/><line x1="223.80" y1="90" x2="223.80" y2="93.5" stroke="#909090" stroke-width="1"/><line x1="243.50" y1="90" x2="243.50" y2="99" stroke="#909090" stroke-width="1"/><line x1="263.20" y1="90" x2="263.20" y2="93.5" stroke="#909090" stroke-width="1"/><line x1="282.90" y1="90" x2="282.90" y2="99" stroke="#909090" stroke-width="1"/><line x1="302.60" y1="90" x2="302.60" y2="93.5" stroke="#909090" stroke-width="1"/><line x1="322.30" y1="90" x2="322.30" y2="99" stroke="#909090" stroke-width="1"/><line x1="342.00" y1="90" x2="342.00" y2="93.5" stroke="#909090" stroke-width="1"/><line x1="361.70" y1="90" x2="361.70" y2="99" stroke="#909090" stroke-width="1"/><line x1="381.40" y1="90" x2="381.40" y2="93.5" stroke="#909090" stroke-width="1"/><line x1="401.10" y1="90" x2="401.10" y2="99" stroke="#909090" stroke-width="1"/><line x1="420.80" y1="90" x2="420.80" y2="93.5" stroke="#909090" stroke-width="1"/><line x1="440.50" y1="90" x2="440.50" y2="99" stroke="#909090" stroke-width="1"/><line x1="460.20" y1="90" x2="460.20" y2="93.5" stroke="#909090" stroke-width="1"/><line x1="479.90" y1="90" x2="479.90" y2="99" stroke="#909090" stroke-width="1"/><line x1="499.60" y1="90" x2="499.60" y2="93.5" stroke="#909090" stroke-width="1"/><line x1="519.30" y1="90" x2="519.30" y2="99" stroke="#909090" stroke-width="1"/><line x1="539.00" y1="90" x2="539.00" y2="93.5" stroke="#909090" stroke-width="1"/><line x1="558.70" y1="90" x2="558.70" y2="99" stroke="#909090" stroke-width="1"/><line x1="578.40" y1="90" x2="578.40" y2="93.5" stroke="#909090" stroke-width="1"/><line x1="598.10" y1="90" x2="598.10" y2="99" stroke="#909090" stroke-width="1"/><line x1="617.80" y1="90" x2="617.80" y2="93.5" stroke="#909090" stroke-width="1"/><line x1="637.50" y1="90" x2="637.50" y2="99" stroke="#909090" stroke-width="1"/><line x1="657.20" y1="90" x2="657.20" y2="93.5" stroke="#909090" stroke-width="1"/></svg>
<div style="left:201.5px;top:433.83px;font:normal 7.9px/7.9px 'Liberation Mono';color:#888888;white-space:nowrap;">300,00</div>
<div style="left:201.5px;top:455.13px;font:normal 7.9px/7.9px 'Liberation Mono';color:#888888;white-space:nowrap;">200,00</div>
<div style="left:201.5px;top:480.23px;font:normal 7.9px/7.9px 'Liberation Mono';color:#888888;white-space:nowrap;">100,00</div>
<div style="left:201.5px;top:501.83px;font:normal 7.9px/7.9px 'Liberation Mono';color:#888888;white-space:nowrap;">0,00</div>
<div style="left:193px;top:471.51px;font:normal 6.5px/6.5px 'Liberation Mono';color:#909090;white-space:nowrap;transform:rotate(-90deg);transform-origin:0 0;">[st]</div>
<div style="left:46.19999999999999px;width:400px;text-align:center;top:515.07px;font:normal 7.4px/7.4px 'Liberation Mono';color:#858585;white-space:nowrap;">01</div>
<div style="left:85.59999999999997px;width:400px;text-align:center;top:515.07px;font:normal 7.4px/7.4px 'Liberation Mono';color:#858585;white-space:nowrap;">03</div>
<div style="left:125.0px;width:400px;text-align:center;top:515.07px;font:normal 7.4px/7.4px 'Liberation Mono';color:#858585;white-space:nowrap;">05</div>
<div style="left:164.39999999999998px;width:400px;text-align:center;top:515.07px;font:normal 7.4px/7.4px 'Liberation Mono';color:#858585;white-space:nowrap;">07</div>
<div style="left:203.79999999999995px;width:400px;text-align:center;top:515.07px;font:normal 7.4px/7.4px 'Liberation Mono';color:#858585;white-space:nowrap;">09</div>
<div style="left:243.2px;width:400px;text-align:center;top:515.07px;font:normal 7.4px/7.4px 'Liberation Mono';color:#858585;white-space:nowrap;">11</div>
<div style="left:282.59999999999997px;width:400px;text-align:center;top:515.07px;font:normal 7.4px/7.4px 'Liberation Mono';color:#858585;white-space:nowrap;">13</div>
<div style="left:322.0px;width:400px;text-align:center;top:515.07px;font:normal 7.4px/7.4px 'Liberation Mono';color:#858585;white-space:nowrap;">15</div>
<div style="left:361.4px;width:400px;text-align:center;top:515.07px;font:normal 7.4px/7.4px 'Liberation Mono';color:#858585;white-space:nowrap;">17</div>
<div style="left:400.79999999999995px;width:400px;text-align:center;top:515.07px;font:normal 7.4px/7.4px 'Liberation Mono';color:#858585;white-space:nowrap;">19</div>
<div style="left:440.20000000000005px;width:400px;text-align:center;top:515.07px;font:normal 7.4px/7.4px 'Liberation Mono';color:#858585;white-space:nowrap;">21</div>
<div style="left:479.5999999999999px;width:400px;text-align:center;top:515.07px;font:normal 7.4px/7.4px 'Liberation Mono';color:#858585;white-space:nowrap;">23</div>
<div style="left:519.0px;width:400px;text-align:center;top:515.07px;font:normal 7.4px/7.4px 'Liberation Mono';color:#858585;white-space:nowrap;">25</div>
<div style="left:558.3999999999999px;width:400px;text-align:center;top:515.07px;font:normal 7.4px/7.4px 'Liberation Mono';color:#858585;white-space:nowrap;">27</div>
<div style="left:597.8px;width:400px;text-align:center;top:515.07px;font:normal 7.4px/7.4px 'Liberation Mono';color:#858585;white-space:nowrap;">29</div>
<div style="left:637.2px;width:400px;text-align:center;top:515.07px;font:normal 7.4px/7.4px 'Liberation Mono';color:#858585;white-space:nowrap;">31</div>
<div style="left:65.89999999999998px;width:400px;text-align:center;top:524.07px;font:normal 7.4px/7.4px 'Liberation Mono';color:#858585;white-space:nowrap;">02</div>
<div style="left:105.29999999999995px;width:400px;text-align:center;top:524.07px;font:normal 7.4px/7.4px 'Liberation Mono';color:#858585;white-space:nowrap;">04</div>
<div style="left:144.7px;width:400px;text-align:center;top:524.07px;font:normal 7.4px/7.4px 'Liberation Mono';color:#858585;white-space:nowrap;">06</div>
<div style="left:184.10000000000002px;width:400px;text-align:center;top:524.07px;font:normal 7.4px/7.4px 'Liberation Mono';color:#858585;white-space:nowrap;">08</div>
<div style="left:223.5px;width:400px;text-align:center;top:524.07px;font:normal 7.4px/7.4px 'Liberation Mono';color:#858585;white-space:nowrap;">10</div>
<div style="left:262.9px;width:400px;text-align:center;top:524.07px;font:normal 7.4px/7.4px 'Liberation Mono';color:#858585;white-space:nowrap;">12</div>
<div style="left:302.29999999999995px;width:400px;text-align:center;top:524.07px;font:normal 7.4px/7.4px 'Liberation Mono';color:#858585;white-space:nowrap;">14</div>
<div style="left:341.70000000000005px;width:400px;text-align:center;top:524.07px;font:normal 7.4px/7.4px 'Liberation Mono';color:#858585;white-space:nowrap;">16</div>
<div style="left:381.0999999999999px;width:400px;text-align:center;top:524.07px;font:normal 7.4px/7.4px 'Liberation Mono';color:#858585;white-space:nowrap;">18</div>
<div style="left:420.5px;width:400px;text-align:center;top:524.07px;font:normal 7.4px/7.4px 'Liberation Mono';color:#858585;white-space:nowrap;">20</div>
<div style="left:459.9px;width:400px;text-align:center;top:524.07px;font:normal 7.4px/7.4px 'Liberation Mono';color:#858585;white-space:nowrap;">22</div>
<div style="left:499.29999999999995px;width:400px;text-align:center;top:524.07px;font:normal 7.4px/7.4px 'Liberation Mono';color:#858585;white-space:nowrap;">24</div>
<div style="left:538.7px;width:400px;text-align:center;top:524.07px;font:normal 7.4px/7.4px 'Liberation Mono';color:#858585;white-space:nowrap;">26</div>
<div style="left:578.0999999999999px;width:400px;text-align:center;top:524.07px;font:normal 7.4px/7.4px 'Liberation Mono';color:#858585;white-space:nowrap;">28</div>
<div style="left:617.5px;width:400px;text-align:center;top:524.07px;font:normal 7.4px/7.4px 'Liberation Mono';color:#858585;white-space:nowrap;">30</div>
<div style="left:189px;top:525.2px;width:671px;height:10.799999999999955px;background:#fff;"></div>
<div style="left:189px;top:525.2px;width:1px;height:10.799999999999955px;background:#808080;"></div>
<div style="left:184px;top:425px;width:677.5px;height:103px;border:3px solid #dc0014;border-radius:6px;"></div>
<div style="left:189.5px;top:538.3px;width:668.0px;height:278.70000000000005px;border:2px solid #7e8288;border-left:1px solid #6e7278;border-right:1px solid #9a9ea4;border-bottom:1.5px solid #6a6e74;background:#fff;"></div>
<div style="left:190.5px;top:540.3px;width:326.5px;height:15.700000000000045px;background:linear-gradient(#ffffff 0%,#f6f7f9 40%,#eef0f3 100%);border-bottom:1px solid #e0e2e6;"></div>
<div style="left:193.8px;top:545.58px;font:normal 8.813999999999998px/8.813999999999998px 'Liberation Sans';color:#1a1a1a;white-space:nowrap;transform:scaleX(0.885);transform-origin:0 50%;-webkit-text-stroke:0.1px #000;">Tag</div>
<div style="left:518.5px;top:541px;width:325.0px;height:15.5px;border:1px solid #6a6a6a;border-radius:2px;background:linear-gradient(#f6f6f6 0%,#ececec 45%,#d8d8d8 55%,#dcdcdc 100%);"></div>
<div style="left:480.5px;width:400px;text-align:center;top:545.19px;font:normal 8.588px/8.588px 'Liberation Sans';color:#1a1a1a;white-space:nowrap;transform:scaleX(0.885);transform-origin:50% 50%;-webkit-text-stroke:0.1px #000;">Leistung Oktober 2016</div>
<div style="left:843.5px;top:540.3px;width:13.0px;height:16.200000000000045px;background:#f0f0f0;"></div>
<div style="left:517px;top:556px;width:1px;height:259px;background:#b0b0b0;"></div>
<div style="left:190px;top:568px;width:653.5px;height:1px;background:#969696;"></div>
<div style="left:191.0px;top:558.58px;font:normal 8.813999999999998px/8.813999999999998px 'Liberation Sans';color:#1a1a1a;white-space:nowrap;transform:scaleX(0.885);transform-origin:0 50%;-webkit-text-stroke:0.1px #000;">09</div>
<div style="left:442.20000000000005px;width:400px;text-align:right;top:558.53px;font:normal 8.927px/8.927px 'Liberation Sans';color:#1a1a1a;white-space:nowrap;transform:scaleX(0.885);transform-origin:100% 50%;-webkit-text-stroke:0.1px #000;">220,00 st</div>
<div style="left:190px;top:579px;width:653.5px;height:1px;background:#969696;"></div>
<div style="left:191.6px;top:569.84px;font:normal 8.813999999999998px/8.813999999999998px 'Liberation Sans';color:#1a1a1a;white-space:nowrap;transform:scaleX(0.885);transform-origin:0 50%;-webkit-text-stroke:0.1px #000;">10</div>
<div style="left:442.20000000000005px;width:400px;text-align:right;top:569.79px;font:normal 8.927px/8.927px 'Liberation Sans';color:#1a1a1a;white-space:nowrap;transform:scaleX(0.885);transform-origin:100% 50%;-webkit-text-stroke:0.1px #000;">220,00 st</div>
<div style="left:190px;top:590px;width:653.5px;height:1px;background:#969696;"></div>
<div style="left:191.6px;top:581.10px;font:normal 8.813999999999998px/8.813999999999998px 'Liberation Sans';color:#1a1a1a;white-space:nowrap;transform:scaleX(0.885);transform-origin:0 50%;-webkit-text-stroke:0.1px #000;">11</div>
<div style="left:442.20000000000005px;width:400px;text-align:right;top:581.05px;font:normal 8.927px/8.927px 'Liberation Sans';color:#1a1a1a;white-space:nowrap;transform:scaleX(0.885);transform-origin:100% 50%;-webkit-text-stroke:0.1px #000;">220,00 st</div>
<div style="left:190px;top:602px;width:653.5px;height:1px;background:#969696;"></div>
<div style="left:191.6px;top:592.36px;font:normal 8.813999999999998px/8.813999999999998px 'Liberation Sans';color:#1a1a1a;white-space:nowrap;transform:scaleX(0.885);transform-origin:0 50%;-webkit-text-stroke:0.1px #000;">12</div>
<div style="left:442.20000000000005px;width:400px;text-align:right;top:592.31px;font:normal 8.927px/8.927px 'Liberation Sans';color:#1a1a1a;white-space:nowrap;transform:scaleX(0.885);transform-origin:100% 50%;-webkit-text-stroke:0.1px #000;">3,00 st</div>
<div style="left:190px;top:613px;width:653.5px;height:1px;background:#969696;"></div>
<div style="left:191.6px;top:603.62px;font:normal 8.813999999999998px/8.813999999999998px 'Liberation Sans';color:#1a1a1a;white-space:nowrap;transform:scaleX(0.885);transform-origin:0 50%;-webkit-text-stroke:0.1px #000;">13</div>
<div style="left:442.20000000000005px;width:400px;text-align:right;top:603.57px;font:normal 8.927px/8.927px 'Liberation Sans';color:#1a1a1a;white-space:nowrap;transform:scaleX(0.885);transform-origin:100% 50%;-webkit-text-stroke:0.1px #000;">220,00 st</div>
<div style="left:190px;top:624px;width:653.5px;height:1px;background:#969696;"></div>
<div style="left:191.6px;top:614.88px;font:normal 8.813999999999998px/8.813999999999998px 'Liberation Sans';color:#1a1a1a;white-space:nowrap;transform:scaleX(0.885);transform-origin:0 50%;-webkit-text-stroke:0.1px #000;">14</div>
<div style="left:442.20000000000005px;width:400px;text-align:right;top:614.83px;font:normal 8.927px/8.927px 'Liberation Sans';color:#1a1a1a;white-space:nowrap;transform:scaleX(0.885);transform-origin:100% 50%;-webkit-text-stroke:0.1px #000;">220,00 st</div>
<div style="left:190px;top:635px;width:653.5px;height:1px;background:#969696;"></div>
<div style="left:191.6px;top:626.14px;font:normal 8.813999999999998px/8.813999999999998px 'Liberation Sans';color:#1a1a1a;white-space:nowrap;transform:scaleX(0.885);transform-origin:0 50%;-webkit-text-stroke:0.1px #000;">15</div>
<div style="left:442.20000000000005px;width:400px;text-align:right;top:626.09px;font:normal 8.927px/8.927px 'Liberation Sans';color:#1a1a1a;white-space:nowrap;transform:scaleX(0.885);transform-origin:100% 50%;-webkit-text-stroke:0.1px #000;">220,00 st</div>
<div style="left:190px;top:647px;width:653.5px;height:1px;background:#969696;"></div>
<div style="left:191.6px;top:637.40px;font:normal 8.813999999999998px/8.813999999999998px 'Liberation Sans';color:#1a1a1a;white-space:nowrap;transform:scaleX(0.885);transform-origin:0 50%;-webkit-text-stroke:0.1px #000;">16</div>
<div style="left:442.20000000000005px;width:400px;text-align:right;top:637.35px;font:normal 8.927px/8.927px 'Liberation Sans';color:#1a1a1a;white-space:nowrap;transform:scaleX(0.885);transform-origin:100% 50%;-webkit-text-stroke:0.1px #000;">16,00 st</div>
<div style="left:190px;top:658px;width:653.5px;height:1px;background:#969696;"></div>
<div style="left:191.6px;top:648.66px;font:normal 8.813999999999998px/8.813999999999998px 'Liberation Sans';color:#1a1a1a;white-space:nowrap;transform:scaleX(0.885);transform-origin:0 50%;-webkit-text-stroke:0.1px #000;">17</div>
<div style="left:442.20000000000005px;width:400px;text-align:right;top:648.61px;font:normal 8.927px/8.927px 'Liberation Sans';color:#1a1a1a;white-space:nowrap;transform:scaleX(0.885);transform-origin:100% 50%;-webkit-text-stroke:0.1px #000;">0,00 st</div>
<div style="left:190px;top:669px;width:653.5px;height:1px;background:#969696;"></div>
<div style="left:191.6px;top:659.92px;font:normal 8.813999999999998px/8.813999999999998px 'Liberation Sans';color:#1a1a1a;white-space:nowrap;transform:scaleX(0.885);transform-origin:0 50%;-webkit-text-stroke:0.1px #000;">18</div>
<div style="left:442.20000000000005px;width:400px;text-align:right;top:659.87px;font:normal 8.927px/8.927px 'Liberation Sans';color:#1a1a1a;white-space:nowrap;transform:scaleX(0.885);transform-origin:100% 50%;-webkit-text-stroke:0.1px #000;">0,00 st</div>
<div style="left:190px;top:680px;width:653.5px;height:1px;background:#969696;"></div>
<div style="left:191.6px;top:671.18px;font:normal 8.813999999999998px/8.813999999999998px 'Liberation Sans';color:#1a1a1a;white-space:nowrap;transform:scaleX(0.885);transform-origin:0 50%;-webkit-text-stroke:0.1px #000;">19</div>
<div style="left:442.20000000000005px;width:400px;text-align:right;top:671.13px;font:normal 8.927px/8.927px 'Liberation Sans';color:#1a1a1a;white-space:nowrap;transform:scaleX(0.885);transform-origin:100% 50%;-webkit-text-stroke:0.1px #000;">0,00 st</div>
<div style="left:190px;top:692px;width:653.5px;height:1px;background:#969696;"></div>
<div style="left:191.6px;top:682.44px;font:normal 8.813999999999998px/8.813999999999998px 'Liberation Sans';color:#1a1a1a;white-space:nowrap;transform:scaleX(0.885);transform-origin:0 50%;-webkit-text-stroke:0.1px #000;">20</div>
<div style="left:442.20000000000005px;width:400px;text-align:right;top:682.39px;font:normal 8.927px/8.927px 'Liberation Sans';color:#1a1a1a;white-space:nowrap;transform:scaleX(0.885);transform-origin:100% 50%;-webkit-text-stroke:0.1px #000;">0,00 st</div>
<div style="left:190px;top:703px;width:653.5px;height:1px;background:#969696;"></div>
<div style="left:191.6px;top:693.70px;font:normal 8.813999999999998px/8.813999999999998px 'Liberation Sans';color:#1a1a1a;white-space:nowrap;transform:scaleX(0.885);transform-origin:0 50%;-webkit-text-stroke:0.1px #000;">21</div>
<div style="left:442.20000000000005px;width:400px;text-align:right;top:693.65px;font:normal 8.927px/8.927px 'Liberation Sans';color:#1a1a1a;white-space:nowrap;transform:scaleX(0.885);transform-origin:100% 50%;-webkit-text-stroke:0.1px #000;">0,00 st</div>
<div style="left:190px;top:714px;width:653.5px;height:1px;background:#969696;"></div>
<div style="left:191.6px;top:704.96px;font:normal 8.813999999999998px/8.813999999999998px 'Liberation Sans';color:#1a1a1a;white-space:nowrap;transform:scaleX(0.885);transform-origin:0 50%;-webkit-text-stroke:0.1px #000;">22</div>
<div style="left:442.20000000000005px;width:400px;text-align:right;top:704.91px;font:normal 8.927px/8.927px 'Liberation Sans';color:#1a1a1a;white-space:nowrap;transform:scaleX(0.885);transform-origin:100% 50%;-webkit-text-stroke:0.1px #000;">0,00 st</div>
<div style="left:190px;top:725px;width:653.5px;height:1px;background:#969696;"></div>
<div style="left:191.6px;top:716.22px;font:normal 8.813999999999998px/8.813999999999998px 'Liberation Sans';color:#1a1a1a;white-space:nowrap;transform:scaleX(0.885);transform-origin:0 50%;-webkit-text-stroke:0.1px #000;">23</div>
<div style="left:442.20000000000005px;width:400px;text-align:right;top:716.17px;font:normal 8.927px/8.927px 'Liberation Sans';color:#1a1a1a;white-space:nowrap;transform:scaleX(0.885);transform-origin:100% 50%;-webkit-text-stroke:0.1px #000;">0,00 st</div>
<div style="left:190px;top:737px;width:653.5px;height:1px;background:#969696;"></div>
<div style="left:191.6px;top:727.48px;font:normal 8.813999999999998px/8.813999999999998px 'Liberation Sans';color:#1a1a1a;white-space:nowrap;transform:scaleX(0.885);transform-origin:0 50%;-webkit-text-stroke:0.1px #000;">24</div>
<div style="left:442.20000000000005px;width:400px;text-align:right;top:727.43px;font:normal 8.927px/8.927px 'Liberation Sans';color:#1a1a1a;white-space:nowrap;transform:scaleX(0.885);transform-origin:100% 50%;-webkit-text-stroke:0.1px #000;">0,00 st</div>
<div style="left:190px;top:748px;width:653.5px;height:1px;background:#969696;"></div>
<div style="left:191.6px;top:738.74px;font:normal 8.813999999999998px/8.813999999999998px 'Liberation Sans';color:#1a1a1a;white-space:nowrap;transform:scaleX(0.885);transform-origin:0 50%;-webkit-text-stroke:0.1px #000;">25</div>
<div style="left:442.20000000000005px;width:400px;text-align:right;top:738.69px;font:normal 8.927px/8.927px 'Liberation Sans';color:#1a1a1a;white-space:nowrap;transform:scaleX(0.885);transform-origin:100% 50%;-webkit-text-stroke:0.1px #000;">0,00 st</div>
<div style="left:190px;top:759px;width:653.5px;height:1px;background:#969696;"></div>
<div style="left:191.6px;top:750.00px;font:normal 8.813999999999998px/8.813999999999998px 'Liberation Sans';color:#1a1a1a;white-space:nowrap;transform:scaleX(0.885);transform-origin:0 50%;-webkit-text-stroke:0.1px #000;">26</div>
<div style="left:442.20000000000005px;width:400px;text-align:right;top:749.95px;font:normal 8.927px/8.927px 'Liberation Sans';color:#1a1a1a;white-space:nowrap;transform:scaleX(0.885);transform-origin:100% 50%;-webkit-text-stroke:0.1px #000;">0,00 st</div>
<div style="left:190px;top:770px;width:653.5px;height:1px;background:#969696;"></div>
<div style="left:191.6px;top:761.26px;font:normal 8.813999999999998px/8.813999999999998px 'Liberation Sans';color:#1a1a1a;white-space:nowrap;transform:scaleX(0.885);transform-origin:0 50%;-webkit-text-stroke:0.1px #000;">27</div>
<div style="left:442.20000000000005px;width:400px;text-align:right;top:761.21px;font:normal 8.927px/8.927px 'Liberation Sans';color:#1a1a1a;white-space:nowrap;transform:scaleX(0.885);transform-origin:100% 50%;-webkit-text-stroke:0.1px #000;">0,00 st</div>
<div style="left:190px;top:782px;width:653.5px;height:1px;background:#969696;"></div>
<div style="left:191.6px;top:772.52px;font:normal 8.813999999999998px/8.813999999999998px 'Liberation Sans';color:#1a1a1a;white-space:nowrap;transform:scaleX(0.885);transform-origin:0 50%;-webkit-text-stroke:0.1px #000;">28</div>
<div style="left:442.20000000000005px;width:400px;text-align:right;top:772.47px;font:normal 8.927px/8.927px 'Liberation Sans';color:#1a1a1a;white-space:nowrap;transform:scaleX(0.885);transform-origin:100% 50%;-webkit-text-stroke:0.1px #000;">0,00 st</div>
<div style="left:190px;top:793px;width:653.5px;height:1px;background:#969696;"></div>
<div style="left:191.6px;top:783.78px;font:normal 8.813999999999998px/8.813999999999998px 'Liberation Sans';color:#1a1a1a;white-space:nowrap;transform:scaleX(0.885);transform-origin:0 50%;-webkit-text-stroke:0.1px #000;">29</div>
<div style="left:442.20000000000005px;width:400px;text-align:right;top:783.73px;font:normal 8.927px/8.927px 'Liberation Sans';color:#1a1a1a;white-space:nowrap;transform:scaleX(0.885);transform-origin:100% 50%;-webkit-text-stroke:0.1px #000;">0,00 st</div>
<div style="left:190px;top:804px;width:653.5px;height:1px;background:#969696;"></div>
<div style="left:191.6px;top:795.04px;font:normal 8.813999999999998px/8.813999999999998px 'Liberation Sans';color:#1a1a1a;white-space:nowrap;transform:scaleX(0.885);transform-origin:0 50%;-webkit-text-stroke:0.1px #000;">30</div>
<div style="left:442.20000000000005px;width:400px;text-align:right;top:794.99px;font:normal 8.927px/8.927px 'Liberation Sans';color:#1a1a1a;white-space:nowrap;transform:scaleX(0.885);transform-origin:100% 50%;-webkit-text-stroke:0.1px #000;">0,00 st</div>
<div style="left:191.6px;top:806.30px;font:normal 8.813999999999998px/8.813999999999998px 'Liberation Sans';color:#1a1a1a;white-space:nowrap;transform:scaleX(0.885);transform-origin:0 50%;-webkit-text-stroke:0.1px #000;">31</div>
<div style="left:442.20000000000005px;width:400px;text-align:right;top:806.25px;font:normal 8.927px/8.927px 'Liberation Sans';color:#1a1a1a;white-space:nowrap;transform:scaleX(0.885);transform-origin:100% 50%;-webkit-text-stroke:0.1px #000;">0,00 st</div>
<div style="left:843.5px;top:556.5px;width:13.0px;height:258.5px;background:#ececec;"></div>
<div style="left:844.5px;top:628px;width:11.0px;height:170px;background:linear-gradient(to right,#f2f2f2,#e0e0e0 50%,#c8c8c8);border:1px solid #c0c0c0;border-radius:2px;"></div>
<div style="left:847px;top:711px;width:6px;height:1px;background:#909090;"></div>
<div style="left:847px;top:713px;width:6px;height:1px;background:#909090;"></div>
<div style="left:847px;top:715px;width:6px;height:1px;background:#909090;"></div>
<svg style="position:absolute;left:846px;top:560px" width="8" height="6" viewBox="0 0 8 6"><path d="M1 5 L4 1.5 L7 5 Z" fill="#404040"/></svg>
<svg style="position:absolute;left:846px;top:808px" width="8" height="6" viewBox="0 0 8 6"><path d="M1 1 L4 4.5 L7 1 Z" fill="#404040"/></svg>
<div style="left:772px;top:533.5px;width:89.5px;height:287.5px;border:3px solid #dc0014;border-radius:6px;"></div>
</body></html>
